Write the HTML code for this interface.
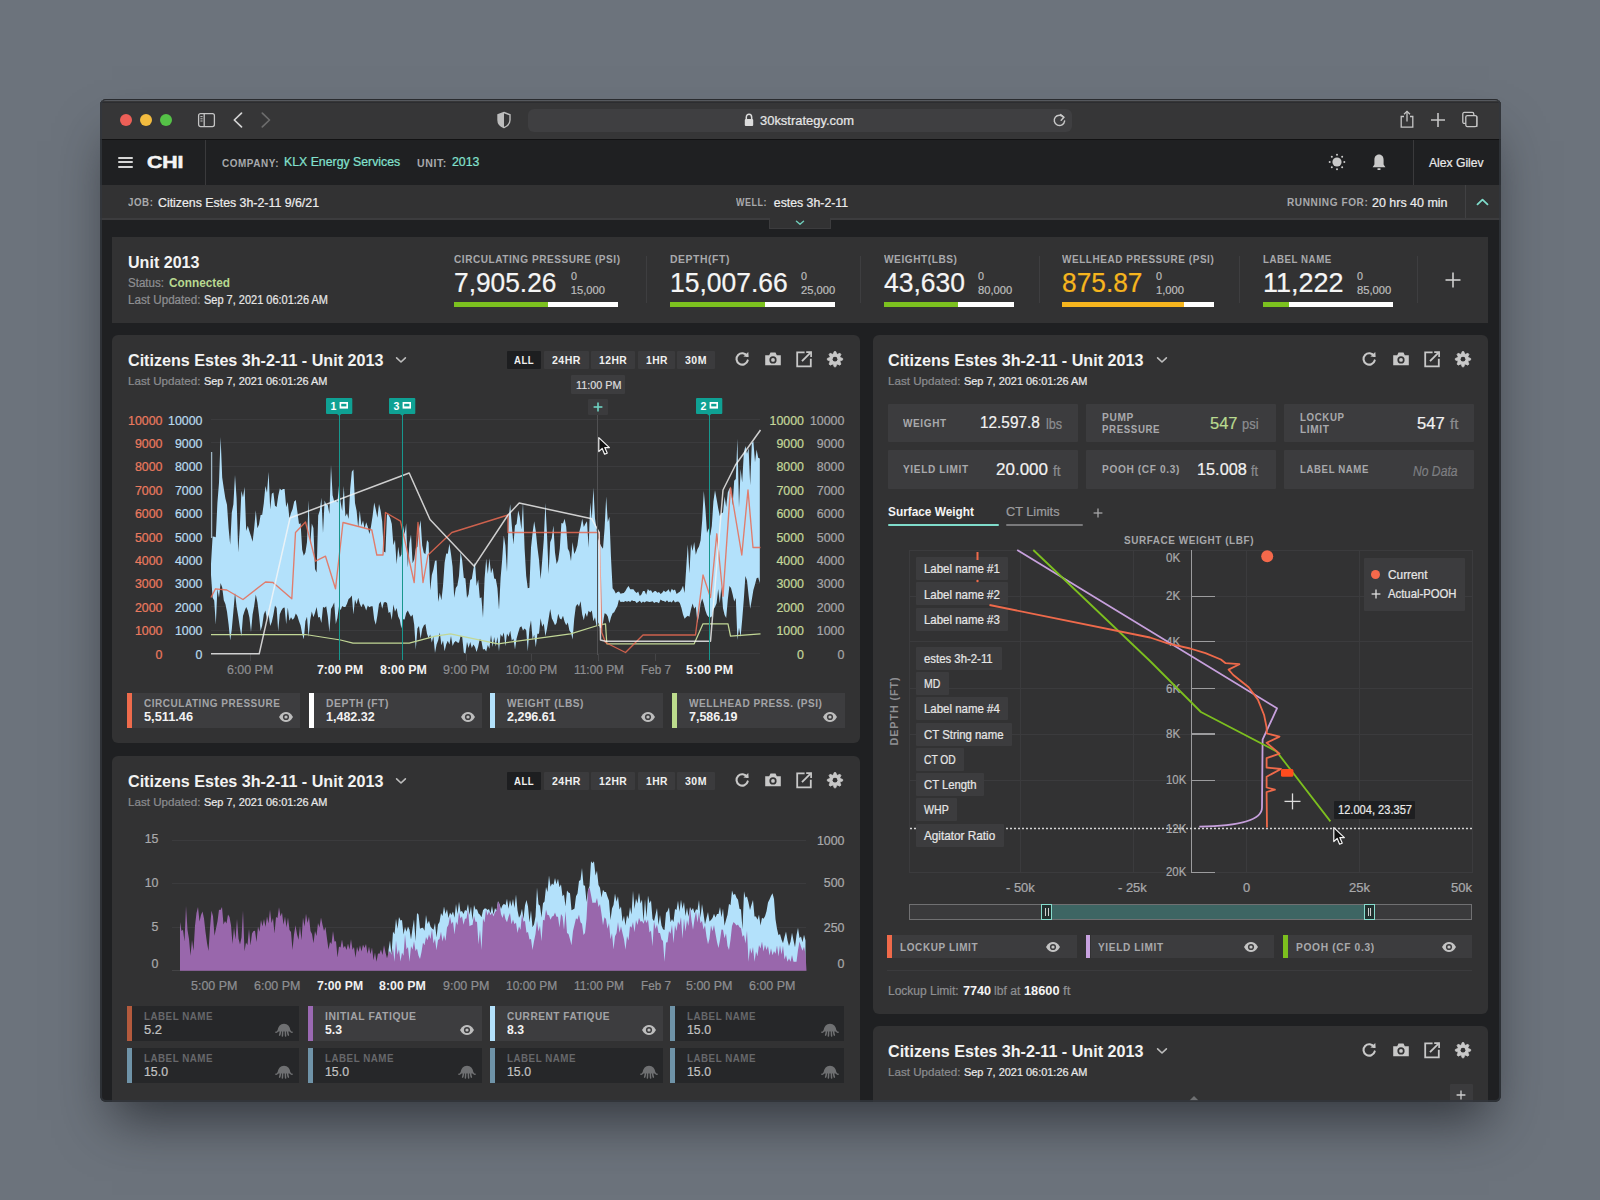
<!DOCTYPE html>
<html><head><meta charset="utf-8">
<style>
*{margin:0;padding:0;box-sizing:border-box}
html,body{width:1600px;height:1200px;overflow:hidden;background:#6c737c;font-family:"Liberation Sans",sans-serif}
.a{position:absolute;white-space:nowrap;line-height:1}
.r{-webkit-text-stroke:0.22px currentColor}
#win{position:absolute;left:99.5px;top:99px;width:1401.3px;height:1002.7px;border-radius:6px 6px 6px 6px;background:#1f2022;overflow:hidden;box-shadow:0 30px 50px -12px rgba(33,36,42,0.75)}
#edge{position:absolute;left:0;top:0;width:1401.3px;height:1002.7px;border-radius:6px 6px 6px 6px;border:2.5px solid rgba(52,56,62,0.75);border-top:1.5px solid rgba(40,43,47,0.9)}
</style></head><body>
<div id="win">
<div class="a" style="left:0.00px;top:0.00px;width:1402.00px;height:40.50px;background:#363637;"></div>
<div class="a" style="left:0.00px;top:40.00px;width:1402.00px;height:1.00px;background:#121213;"></div>
<div class="a" style="left:0.00px;top:1.40px;width:1402.00px;height:0.90px;background:#55585d;"></div>
<div class="a" style="left:0.00px;top:2.50px;width:1402.00px;height:1.00px;background:#2c2d30;"></div>
<div class="a" style="left:20.50px;top:15.00px;width:12.00px;height:12.00px;background:#ec5f57;border-radius:6px"></div>
<div class="a" style="left:40.50px;top:15.00px;width:12.00px;height:12.00px;background:#f2bb3f;border-radius:6px"></div>
<div class="a" style="left:60.50px;top:15.00px;width:12.00px;height:12.00px;background:#55c247;border-radius:6px"></div>
<svg class="a" style="left:96.50px;top:12.00px;" width="22" height="18" viewBox="0 0 22 18"><rect x="2.6" y="2.6" width="15.8" height="13" rx="2" fill="none" stroke="#c4c4c4" stroke-width="1.3"/><line x1="8.2" y1="3" x2="8.2" y2="15.5" stroke="#c4c4c4" stroke-width="1.3"/><line x1="4.4" y1="5.6" x2="6.6" y2="5.6" stroke="#c4c4c4" stroke-width="1"/><line x1="4.4" y1="7.8" x2="6.6" y2="7.8" stroke="#c4c4c4" stroke-width="1"/><line x1="4.4" y1="10" x2="6.6" y2="10" stroke="#c4c4c4" stroke-width="1"/></svg>
<svg class="a" style="left:130.50px;top:11.00px;" width="16" height="20" viewBox="0 0 16 20"><polyline points="11.5,3.2 4.3,10 11.5,16.8" fill="none" stroke="#d2d2d2" stroke-width="1.7" stroke-linecap="round" stroke-linejoin="round"/></svg>
<svg class="a" style="left:158.50px;top:11.00px;" width="16" height="20" viewBox="0 0 16 20"><polyline points="4.3,3.2 11.5,10 4.3,16.8" fill="none" stroke="#6c6c6c" stroke-width="1.7" stroke-linecap="round" stroke-linejoin="round"/></svg>
<svg class="a" style="left:396.50px;top:12.00px;" width="16" height="18" viewBox="0 0 16 18"><path d="M8 1.5 L14 3.8 V9 C14 12.8 11.3 15.3 8 16.6 C4.7 15.3 2 12.8 2 9 V3.8 Z" fill="none" stroke="#bdbdbd" stroke-width="1.4"/><path d="M8 1.5 L2 3.8 V9 C2 12.8 4.7 15.3 8 16.6 Z" fill="#bdbdbd"/></svg>
<div class="a" style="left:428.50px;top:9.50px;width:544.00px;height:23.00px;background:#3f3f41;border-radius:6px"></div>
<svg class="a" style="left:643.50px;top:14.00px;" width="12" height="14" viewBox="0 0 12 14"><path d="M3.3 6 V4.4 C3.3 2.4 4.6 1.2 6 1.2 C7.4 1.2 8.7 2.4 8.7 4.4 V6" fill="none" stroke="#dcdcdc" stroke-width="1.5"/><rect x="1.8" y="6" width="8.4" height="7" rx="1" fill="#dcdcdc"/></svg>
<div class="a t r" style="left:660.50px;top:14.80px;font-size:13px;color:#e6e6e6;transform:scaleX(0.9955);transform-origin:0 0;">30kstrategy.com</div>
<svg class="a" style="left:951.50px;top:13.00px;" width="17" height="17" viewBox="0 0 17 17"><path d="M12.6 5.2 A5.2 5.2 0 1 0 13.6 9" fill="none" stroke="#c8c8c8" stroke-width="1.5" stroke-linecap="round"/><polyline points="9.6,2.6 12.9,5.3 10.2,8.2" fill="none" stroke="#c8c8c8" stroke-width="1.5" stroke-linecap="round" stroke-linejoin="round"/></svg>
<svg class="a" style="left:1297.50px;top:10.00px;" width="20" height="20" viewBox="0 0 20 20"><path d="M7 7.5 H4.2 V18.2 H15.8 V7.5 H13" fill="none" stroke="#c6c6c6" stroke-width="1.3"/><line x1="10" y1="2.5" x2="10" y2="12.5" stroke="#c6c6c6" stroke-width="1.3"/><polyline points="7,5.3 10,2.4 13,5.3" fill="none" stroke="#c6c6c6" stroke-width="1.3"/></svg>
<svg class="a" style="left:1328.50px;top:11.00px;" width="20" height="20" viewBox="0 0 20 20"><line x1="10" y1="3" x2="10" y2="17" stroke="#c6c6c6" stroke-width="1.6"/><line x1="3" y1="10" x2="17" y2="10" stroke="#c6c6c6" stroke-width="1.6"/></svg>
<svg class="a" style="left:1360.50px;top:11.00px;" width="20" height="20" viewBox="0 0 20 20"><rect x="2.8" y="2.4" width="11" height="11" rx="1.5" fill="none" stroke="#c6c6c6" stroke-width="1.3"/><path d="M6.2 16.4 H16.8 V6.2" fill="none" stroke="#c6c6c6" stroke-width="1.3"/><rect x="5.8" y="5.6" width="11" height="11" rx="1.5" fill="#363637" stroke="#c6c6c6" stroke-width="1.3"/></svg>
<div class="a" style="left:0.00px;top:41.00px;width:1402.00px;height:45.00px;background:#1f2022;"></div>
<div class="a" style="left:18.50px;top:58.20px;width:15.20px;height:1.90px;background:#d6d6d6;border-radius:1px"></div>
<div class="a" style="left:18.50px;top:62.40px;width:15.20px;height:1.90px;background:#d6d6d6;border-radius:1px"></div>
<div class="a" style="left:18.50px;top:66.70px;width:15.20px;height:1.90px;background:#d6d6d6;border-radius:1px"></div>
<div class="a t" style="left:47.10px;top:55.59px;font-size:15.6px;color:#f4f4f4;font-weight:bold;-webkit-text-stroke:0.5px #f4f4f4;transform:scaleX(1.3589);transform-origin:0 0;">CHI</div>
<div class="a" style="left:105.50px;top:41.00px;width:1.00px;height:45.00px;background:#3a3a3c;"></div>
<div class="a t" style="left:122.10px;top:58.63px;font-size:10.6px;color:#a8a9ac;font-weight:bold;letter-spacing:0.6px;transform:scaleX(0.9359);transform-origin:0 0;">COMPANY:</div>
<div class="a t r" style="left:184.00px;top:57.33px;font-size:12.6px;color:#83e0cf;transform:scaleX(0.9765);transform-origin:0 0;">KLX Energy Services</div>
<div class="a t" style="left:317.10px;top:58.63px;font-size:10.6px;color:#a8a9ac;font-weight:bold;letter-spacing:0.6px;transform:scaleX(0.9974);transform-origin:0 0;">UNIT:</div>
<div class="a t r" style="left:352.50px;top:57.33px;font-size:12.6px;color:#83e0cf;transform:scaleX(0.9810);transform-origin:0 0;">2013</div>
<svg class="a" style="left:1228.20px;top:54.00px;" width="18" height="18" viewBox="0 0 18 18"><circle cx="9" cy="9" r="4.6" fill="#c9c9c9"/><circle cx="16.30" cy="9.00" r="1" fill="#c9c9c9"/><circle cx="14.16" cy="14.16" r="1" fill="#c9c9c9"/><circle cx="9.00" cy="16.30" r="1" fill="#c9c9c9"/><circle cx="3.84" cy="14.16" r="1" fill="#c9c9c9"/><circle cx="1.70" cy="9.00" r="1" fill="#c9c9c9"/><circle cx="3.84" cy="3.84" r="1" fill="#c9c9c9"/><circle cx="9.00" cy="1.70" r="1" fill="#c9c9c9"/><circle cx="14.16" cy="3.84" r="1" fill="#c9c9c9"/></svg>
<svg class="a" style="left:1271.50px;top:54.00px;" width="16" height="19" viewBox="0 0 16 19"><path d="M8 1.6 C5 1.6 3.4 4 3.4 7 V11.6 L1.6 14.2 H14.4 L12.6 11.6 V7 C12.6 4 11 1.6 8 1.6 Z" fill="#c9c9c9"/><rect x="6.3" y="15.2" width="3.4" height="1.8" rx="0.9" fill="#c9c9c9"/></svg>
<div class="a" style="left:1313.00px;top:41.00px;width:1.00px;height:45.00px;background:#3a3a3c;"></div>
<div class="a t r" style="left:1329.50px;top:58.33px;font-size:12.6px;color:#e9e9e9;transform:scaleX(0.9629);transform-origin:0 0;">Alex Gilev</div>
<div class="a" style="left:0.00px;top:86.00px;width:1402.00px;height:33.00px;background:#323233;"></div>
<div class="a" style="left:0.00px;top:119.00px;width:1402.00px;height:1.60px;background:#3c3c3e;"></div>
<div class="a t" style="left:28.00px;top:98.67px;font-size:10.2px;color:#a8a9ac;font-weight:bold;letter-spacing:0.6px;transform:scaleX(0.9533);transform-origin:0 0;">JOB:</div>
<div class="a t r" style="left:58.00px;top:97.99px;font-size:12.3px;color:#ececec;transform:scaleX(1.0037);transform-origin:0 0;">Citizens Estes 3h-2-11 9/6/21</div>
<div class="a t" style="left:636.30px;top:98.67px;font-size:10.2px;color:#a8a9ac;font-weight:bold;letter-spacing:0.6px;transform:scaleX(0.8794);transform-origin:0 0;">WELL:</div>
<div class="a t r" style="left:674.30px;top:97.99px;font-size:12.3px;color:#ececec;">estes 3h-2-11</div>
<div class="a t" style="left:1187.10px;top:98.67px;font-size:10.2px;color:#a8a9ac;font-weight:bold;letter-spacing:0.6px;transform:scaleX(0.9870);transform-origin:0 0;">RUNNING FOR:</div>
<div class="a t r" style="left:1272.50px;top:97.99px;font-size:12.3px;color:#ececec;transform:scaleX(1.0132);transform-origin:0 0;">20 hrs 40 min</div>
<div class="a" style="left:1365.00px;top:86.00px;width:1.00px;height:33.00px;background:#414143;"></div>
<svg class="a" style="left:1375.50px;top:98.00px;" width="15" height="10" viewBox="0 0 15 10"><polyline points="2.5,7.3 7.5,2.6 12.5,7.3" fill="none" stroke="#7fdccb" stroke-width="1.8" stroke-linecap="round" stroke-linejoin="round"/></svg>
<div class="a" style="left:669.30px;top:119.00px;width:62.50px;height:11.00px;background:#323233;border:1px solid #3c3c3e;border-top:none"></div>
<svg class="a" style="left:694.50px;top:120.00px;" width="12" height="8" viewBox="0 0 12 8"><polyline points="2.5,2.3 6,5.3 9.5,2.3" fill="none" stroke="#6fcbb9" stroke-width="1.5" stroke-linecap="round" stroke-linejoin="round"/></svg>
<div class="a" style="left:12.50px;top:138.00px;width:1376.00px;height:85.50px;background:#323233;"></div>
<div class="a t" style="left:28.00px;top:155.93px;font-size:15.8px;color:#f3f3f3;font-weight:bold;transform:scaleX(1.0178);transform-origin:0 0;">Unit 2013</div>
<div class="a t r" style="left:28.00px;top:178.04px;font-size:12px;color:#8e8f92;transform:scaleX(0.9636);transform-origin:0 0;">Status:</div>
<div class="a t" style="left:69.50px;top:177.70px;font-size:12.4px;color:#b8d890;font-weight:bold;transform:scaleX(0.9527);transform-origin:0 0;">Connected</div>
<div class="a t r" style="left:28.00px;top:195.04px;font-size:12px;color:#8e8f92;transform:scaleX(0.9703);transform-origin:0 0;">Last Updated:</div>
<div class="a t r" style="left:104.00px;top:195.04px;font-size:12px;color:#e6e6e6;transform:scaleX(0.9154);transform-origin:0 0;">Sep 7, 2021 06:01:26 AM</div>
<div class="a t" style="left:354.90px;top:154.86px;font-size:10.8px;color:#a8a9ac;font-weight:bold;letter-spacing:0.6px;transform:scaleX(0.9298);transform-origin:0 0;">CIRCULATING PRESSURE (PSI)</div>
<div class="a t r" style="left:354.90px;top:170.22px;font-size:27.5px;color:#f5f5f5;transform:scaleX(0.9566);transform-origin:0 0;">7,905.26</div>
<div class="a t r" style="left:471.20px;top:171.52px;font-size:11.2px;color:#bcbcbc;transform:scaleX(0.9624);transform-origin:0 0;">0</div>
<div class="a t r" style="left:471.20px;top:185.52px;font-size:11.2px;color:#bcbcbc;">15,000</div>
<div class="a" style="left:354.90px;top:202.80px;width:163.60px;height:5.40px;background:#ffffff;"></div>
<div class="a" style="left:354.90px;top:202.80px;width:93.20px;height:5.40px;background:#7cc11f;"></div>
<div class="a" style="left:546.50px;top:157.00px;width:1.00px;height:47.00px;background:#3e3e40;"></div>
<div class="a t" style="left:570.50px;top:154.86px;font-size:10.8px;color:#a8a9ac;font-weight:bold;letter-spacing:0.6px;transform:scaleX(0.9619);transform-origin:0 0;">DEPTH(FT)</div>
<div class="a t r" style="left:570.50px;top:170.22px;font-size:27.5px;color:#f5f5f5;transform:scaleX(0.9629);transform-origin:0 0;">15,007.66</div>
<div class="a t r" style="left:701.50px;top:171.52px;font-size:11.2px;color:#bcbcbc;transform:scaleX(0.9624);transform-origin:0 0;">0</div>
<div class="a t r" style="left:701.50px;top:185.52px;font-size:11.2px;color:#bcbcbc;">25,000</div>
<div class="a" style="left:570.50px;top:202.80px;width:165.00px;height:5.40px;background:#ffffff;"></div>
<div class="a" style="left:570.50px;top:202.80px;width:95.00px;height:5.40px;background:#7cc11f;"></div>
<div class="a" style="left:760.50px;top:157.00px;width:1.00px;height:47.00px;background:#3e3e40;"></div>
<div class="a t" style="left:784.50px;top:154.86px;font-size:10.8px;color:#a8a9ac;font-weight:bold;letter-spacing:0.6px;transform:scaleX(0.9354);transform-origin:0 0;">WEIGHT(LBS)</div>
<div class="a t r" style="left:784.50px;top:170.22px;font-size:27.5px;color:#f5f5f5;transform:scaleX(0.9629);transform-origin:0 0;">43,630</div>
<div class="a t r" style="left:878.50px;top:171.52px;font-size:11.2px;color:#bcbcbc;transform:scaleX(0.9624);transform-origin:0 0;">0</div>
<div class="a t r" style="left:878.50px;top:185.52px;font-size:11.2px;color:#bcbcbc;">80,000</div>
<div class="a" style="left:784.50px;top:202.80px;width:130.30px;height:5.40px;background:#ffffff;"></div>
<div class="a" style="left:784.50px;top:202.80px;width:74.30px;height:5.40px;background:#7cc11f;"></div>
<div class="a" style="left:939.00px;top:157.00px;width:1.00px;height:47.00px;background:#3e3e40;"></div>
<div class="a t" style="left:962.50px;top:154.86px;font-size:10.8px;color:#a8a9ac;font-weight:bold;letter-spacing:0.6px;transform:scaleX(0.9232);transform-origin:0 0;">WELLHEAD PRESSURE (PSI)</div>
<div class="a t r" style="left:962.50px;top:170.22px;font-size:27.5px;color:#f6b51e;transform:scaleX(0.9569);transform-origin:0 0;">875.87</div>
<div class="a t r" style="left:1056.50px;top:171.52px;font-size:11.2px;color:#bcbcbc;transform:scaleX(0.9624);transform-origin:0 0;">0</div>
<div class="a t r" style="left:1056.50px;top:185.52px;font-size:11.2px;color:#bcbcbc;">1,000</div>
<div class="a" style="left:962.50px;top:202.80px;width:152.00px;height:5.40px;background:#ffffff;"></div>
<div class="a" style="left:962.50px;top:202.80px;width:121.50px;height:5.40px;background:#f6b51e;"></div>
<div class="a" style="left:1139.50px;top:157.00px;width:1.00px;height:47.00px;background:#3e3e40;"></div>
<div class="a t" style="left:1163.90px;top:154.86px;font-size:10.8px;color:#a8a9ac;font-weight:bold;letter-spacing:0.6px;transform:scaleX(0.8982);transform-origin:0 0;">LABEL NAME</div>
<div class="a t r" style="left:1163.90px;top:170.22px;font-size:27.5px;color:#f5f5f5;transform:scaleX(0.9820);transform-origin:0 0;">11,222</div>
<div class="a t r" style="left:1257.50px;top:171.52px;font-size:11.2px;color:#bcbcbc;transform:scaleX(0.9624);transform-origin:0 0;">0</div>
<div class="a t r" style="left:1257.50px;top:185.52px;font-size:11.2px;color:#bcbcbc;">85,000</div>
<div class="a" style="left:1163.90px;top:202.80px;width:130.00px;height:5.40px;background:#ffffff;"></div>
<div class="a" style="left:1163.90px;top:202.80px;width:25.60px;height:5.40px;background:#7cc11f;"></div>
<div class="a" style="left:1317.50px;top:157.00px;width:1.00px;height:47.00px;background:#3e3e40;"></div>
<svg class="a" style="left:1344.50px;top:172.00px;" width="18" height="18" viewBox="0 0 18 18"><line x1="9" y1="1.5" x2="9" y2="16.5" stroke="#d0d0d0" stroke-width="1.6"/><line x1="1.5" y1="9" x2="16.5" y2="9" stroke="#d0d0d0" stroke-width="1.6"/></svg>
<div class="a" style="left:12.50px;top:236.00px;width:748.00px;height:408.00px;background:#323233;border-radius:6px"></div>
<div class="a" style="left:12.50px;top:657.00px;width:748.00px;height:400.00px;background:#323233;border-radius:6px"></div>
<div class="a" style="left:773.00px;top:236.00px;width:615.50px;height:678.50px;background:#323233;border-radius:6px"></div>
<div class="a" style="left:773.00px;top:927.00px;width:615.50px;height:200.00px;background:#323233;border-radius:6px"></div>
<div class="a t" style="left:28.10px;top:252.89px;font-size:16.2px;color:#f2f2f2;font-weight:bold;transform:scaleX(0.9961);transform-origin:0 0;">Citizens Estes 3h-2-11 - Unit 2013</div>
<svg class="a" style="left:294.50px;top:256.00px;" width="14" height="10" viewBox="0 0 14 10"><polyline points="2.6,2.8 7,7.0 11.4,2.8" fill="none" stroke="#bdbdbd" stroke-width="1.6" stroke-linecap="round" stroke-linejoin="round"/></svg>
<div class="a t r" style="left:28.10px;top:276.52px;font-size:11.2px;color:#8b8c8f;transform:scaleX(1.0392);transform-origin:0 0;">Last Updated:</div>
<div class="a t r" style="left:104.10px;top:276.52px;font-size:11.2px;color:#e9e9e9;transform:scaleX(0.9772);transform-origin:0 0;">Sep 7, 2021 06:01:26 AM</div>
<div class="a" style="left:407.40px;top:251.50px;width:34.40px;height:18.20px;background:#1d1e20;border-radius:1px"></div>
<div class="a t" style="left:414.25px;top:255.63px;font-size:10.6px;color:#f0f0f0;font-weight:bold;letter-spacing:0.5px;transform:scaleX(0.9052);transform-origin:0 0;">ALL</div>
<div class="a" style="left:444.80px;top:251.50px;width:44.40px;height:18.20px;background:#3b3b3d;border-radius:1px"></div>
<div class="a t" style="left:452.80px;top:255.63px;font-size:10.6px;color:#f0f0f0;font-weight:bold;letter-spacing:0.5px;transform:scaleX(0.9968);transform-origin:0 0;">24HR</div>
<div class="a" style="left:491.30px;top:251.50px;width:44.70px;height:18.20px;background:#3b3b3d;border-radius:1px"></div>
<div class="a t" style="left:499.80px;top:255.63px;font-size:10.6px;color:#f0f0f0;font-weight:bold;letter-spacing:0.5px;transform:scaleX(0.9727);transform-origin:0 0;">12HR</div>
<div class="a" style="left:538.00px;top:251.50px;width:37.20px;height:18.20px;background:#3b3b3d;border-radius:1px"></div>
<div class="a t" style="left:546.00px;top:255.63px;font-size:10.6px;color:#f0f0f0;font-weight:bold;letter-spacing:0.5px;transform:scaleX(0.9690);transform-origin:0 0;">1HR</div>
<div class="a" style="left:577.90px;top:251.50px;width:37.20px;height:18.20px;background:#3b3b3d;border-radius:1px"></div>
<div class="a t" style="left:585.50px;top:255.63px;font-size:10.6px;color:#f0f0f0;font-weight:bold;letter-spacing:0.5px;transform:scaleX(0.9951);transform-origin:0 0;">30M</div>
<svg class="a" style="left:633.10px;top:250.90px;" width="18" height="18" viewBox="0 0 18 18"><path d="M14.1 6.0 A5.7 5.7 0 1 0 14.7 10.4" fill="none" stroke="#c8c8c8" stroke-width="2.1" stroke-linecap="round"/><path d="M10.4 6.6 L15.6 7.0 L15.3 1.9 Z" fill="#c8c8c8"/></svg>
<svg class="a" style="left:664.40px;top:250.70px;" width="18" height="18" viewBox="0 0 18 18"><path d="M1.2 5.2 H5.2 L6.5 2.6 H11.5 L12.8 5.2 H16.8 V15.2 H1.2 Z" fill="#c8c8c8"/><circle cx="9" cy="9.9" r="3.6" fill="#323233"/><circle cx="9" cy="9.9" r="1.9" fill="#c8c8c8"/></svg>
<svg class="a" style="left:695.30px;top:251.00px;" width="18" height="18" viewBox="0 0 18 18"><path d="M9.6 2.3 H2.2 V16.3 H15.8 V8.8" fill="none" stroke="#c8c8c8" stroke-width="1.8"/><path d="M11.2 2.1 H16.1 V7.0" fill="none" stroke="#c8c8c8" stroke-width="1.7"/><line x1="15.8" y1="2.4" x2="7.0" y2="11.2" stroke="#c8c8c8" stroke-width="1.9"/></svg>
<svg class="a" style="left:726.40px;top:251.10px;" width="18" height="18" viewBox="0 0 18 18"><path d="M8.25,1.54 L9.75,1.54 L10.63,3.84 L11.64,4.26 L13.88,3.25 L14.95,4.32 L13.94,6.56 L14.36,7.57 L16.66,8.45 L16.66,9.95 L14.36,10.83 L13.94,11.84 L14.95,14.08 L13.88,15.15 L11.64,14.14 L10.63,14.56 L9.75,16.86 L8.25,16.86 L7.37,14.56 L6.36,14.14 L4.12,15.15 L3.05,14.08 L4.06,11.84 L3.64,10.83 L1.34,9.95 L1.34,8.45 L3.64,7.57 L4.06,6.56 L3.05,4.32 L4.12,3.25 L6.36,4.26 L7.37,3.84Z" fill="#c8c8c8" stroke="#c8c8c8" stroke-width="0.8" stroke-linejoin="round"/><circle cx="9" cy="9.2" r="2.4" fill="#323233"/></svg>
<div class="a t" style="left:28.10px;top:673.89px;font-size:16.2px;color:#f2f2f2;font-weight:bold;transform:scaleX(0.9961);transform-origin:0 0;">Citizens Estes 3h-2-11 - Unit 2013</div>
<svg class="a" style="left:294.50px;top:677.00px;" width="14" height="10" viewBox="0 0 14 10"><polyline points="2.6,2.8 7,7.0 11.4,2.8" fill="none" stroke="#bdbdbd" stroke-width="1.6" stroke-linecap="round" stroke-linejoin="round"/></svg>
<div class="a t r" style="left:28.10px;top:697.52px;font-size:11.2px;color:#8b8c8f;transform:scaleX(1.0392);transform-origin:0 0;">Last Updated:</div>
<div class="a t r" style="left:104.10px;top:697.52px;font-size:11.2px;color:#e9e9e9;transform:scaleX(0.9772);transform-origin:0 0;">Sep 7, 2021 06:01:26 AM</div>
<div class="a" style="left:407.40px;top:672.50px;width:34.40px;height:18.20px;background:#1d1e20;border-radius:1px"></div>
<div class="a t" style="left:414.25px;top:676.63px;font-size:10.6px;color:#f0f0f0;font-weight:bold;letter-spacing:0.5px;transform:scaleX(0.9052);transform-origin:0 0;">ALL</div>
<div class="a" style="left:444.80px;top:672.50px;width:44.40px;height:18.20px;background:#3b3b3d;border-radius:1px"></div>
<div class="a t" style="left:452.80px;top:676.63px;font-size:10.6px;color:#f0f0f0;font-weight:bold;letter-spacing:0.5px;transform:scaleX(0.9968);transform-origin:0 0;">24HR</div>
<div class="a" style="left:491.30px;top:672.50px;width:44.70px;height:18.20px;background:#3b3b3d;border-radius:1px"></div>
<div class="a t" style="left:499.80px;top:676.63px;font-size:10.6px;color:#f0f0f0;font-weight:bold;letter-spacing:0.5px;transform:scaleX(0.9727);transform-origin:0 0;">12HR</div>
<div class="a" style="left:538.00px;top:672.50px;width:37.20px;height:18.20px;background:#3b3b3d;border-radius:1px"></div>
<div class="a t" style="left:546.00px;top:676.63px;font-size:10.6px;color:#f0f0f0;font-weight:bold;letter-spacing:0.5px;transform:scaleX(0.9690);transform-origin:0 0;">1HR</div>
<div class="a" style="left:577.90px;top:672.50px;width:37.20px;height:18.20px;background:#3b3b3d;border-radius:1px"></div>
<div class="a t" style="left:585.50px;top:676.63px;font-size:10.6px;color:#f0f0f0;font-weight:bold;letter-spacing:0.5px;transform:scaleX(0.9951);transform-origin:0 0;">30M</div>
<svg class="a" style="left:633.10px;top:672.20px;" width="18" height="18" viewBox="0 0 18 18"><path d="M14.1 6.0 A5.7 5.7 0 1 0 14.7 10.4" fill="none" stroke="#c8c8c8" stroke-width="2.1" stroke-linecap="round"/><path d="M10.4 6.6 L15.6 7.0 L15.3 1.9 Z" fill="#c8c8c8"/></svg>
<svg class="a" style="left:664.40px;top:672.00px;" width="18" height="18" viewBox="0 0 18 18"><path d="M1.2 5.2 H5.2 L6.5 2.6 H11.5 L12.8 5.2 H16.8 V15.2 H1.2 Z" fill="#c8c8c8"/><circle cx="9" cy="9.9" r="3.6" fill="#323233"/><circle cx="9" cy="9.9" r="1.9" fill="#c8c8c8"/></svg>
<svg class="a" style="left:695.30px;top:672.30px;" width="18" height="18" viewBox="0 0 18 18"><path d="M9.6 2.3 H2.2 V16.3 H15.8 V8.8" fill="none" stroke="#c8c8c8" stroke-width="1.8"/><path d="M11.2 2.1 H16.1 V7.0" fill="none" stroke="#c8c8c8" stroke-width="1.7"/><line x1="15.8" y1="2.4" x2="7.0" y2="11.2" stroke="#c8c8c8" stroke-width="1.9"/></svg>
<svg class="a" style="left:726.40px;top:672.40px;" width="18" height="18" viewBox="0 0 18 18"><path d="M8.25,1.54 L9.75,1.54 L10.63,3.84 L11.64,4.26 L13.88,3.25 L14.95,4.32 L13.94,6.56 L14.36,7.57 L16.66,8.45 L16.66,9.95 L14.36,10.83 L13.94,11.84 L14.95,14.08 L13.88,15.15 L11.64,14.14 L10.63,14.56 L9.75,16.86 L8.25,16.86 L7.37,14.56 L6.36,14.14 L4.12,15.15 L3.05,14.08 L4.06,11.84 L3.64,10.83 L1.34,9.95 L1.34,8.45 L3.64,7.57 L4.06,6.56 L3.05,4.32 L4.12,3.25 L6.36,4.26 L7.37,3.84Z" fill="#c8c8c8" stroke="#c8c8c8" stroke-width="0.8" stroke-linejoin="round"/><circle cx="9" cy="9.2" r="2.4" fill="#323233"/></svg>
<div class="a t" style="left:788.60px;top:252.89px;font-size:16.2px;color:#f2f2f2;font-weight:bold;transform:scaleX(0.9961);transform-origin:0 0;">Citizens Estes 3h-2-11 - Unit 2013</div>
<svg class="a" style="left:1055.00px;top:256.00px;" width="14" height="10" viewBox="0 0 14 10"><polyline points="2.6,2.8 7,7.0 11.4,2.8" fill="none" stroke="#bdbdbd" stroke-width="1.6" stroke-linecap="round" stroke-linejoin="round"/></svg>
<div class="a t r" style="left:788.60px;top:276.52px;font-size:11.2px;color:#8b8c8f;transform:scaleX(1.0392);transform-origin:0 0;">Last Updated:</div>
<div class="a t r" style="left:864.60px;top:276.52px;font-size:11.2px;color:#e9e9e9;transform:scaleX(0.9772);transform-origin:0 0;">Sep 7, 2021 06:01:26 AM</div>
<svg class="a" style="left:1260.40px;top:250.90px;" width="18" height="18" viewBox="0 0 18 18"><path d="M14.1 6.0 A5.7 5.7 0 1 0 14.7 10.4" fill="none" stroke="#c8c8c8" stroke-width="2.1" stroke-linecap="round"/><path d="M10.4 6.6 L15.6 7.0 L15.3 1.9 Z" fill="#c8c8c8"/></svg>
<svg class="a" style="left:1292.40px;top:250.70px;" width="18" height="18" viewBox="0 0 18 18"><path d="M1.2 5.2 H5.2 L6.5 2.6 H11.5 L12.8 5.2 H16.8 V15.2 H1.2 Z" fill="#c8c8c8"/><circle cx="9" cy="9.9" r="3.6" fill="#323233"/><circle cx="9" cy="9.9" r="1.9" fill="#c8c8c8"/></svg>
<svg class="a" style="left:1323.40px;top:251.00px;" width="18" height="18" viewBox="0 0 18 18"><path d="M9.6 2.3 H2.2 V16.3 H15.8 V8.8" fill="none" stroke="#c8c8c8" stroke-width="1.8"/><path d="M11.2 2.1 H16.1 V7.0" fill="none" stroke="#c8c8c8" stroke-width="1.7"/><line x1="15.8" y1="2.4" x2="7.0" y2="11.2" stroke="#c8c8c8" stroke-width="1.9"/></svg>
<svg class="a" style="left:1354.80px;top:251.10px;" width="18" height="18" viewBox="0 0 18 18"><path d="M8.25,1.54 L9.75,1.54 L10.63,3.84 L11.64,4.26 L13.88,3.25 L14.95,4.32 L13.94,6.56 L14.36,7.57 L16.66,8.45 L16.66,9.95 L14.36,10.83 L13.94,11.84 L14.95,14.08 L13.88,15.15 L11.64,14.14 L10.63,14.56 L9.75,16.86 L8.25,16.86 L7.37,14.56 L6.36,14.14 L4.12,15.15 L3.05,14.08 L4.06,11.84 L3.64,10.83 L1.34,9.95 L1.34,8.45 L3.64,7.57 L4.06,6.56 L3.05,4.32 L4.12,3.25 L6.36,4.26 L7.37,3.84Z" fill="#c8c8c8" stroke="#c8c8c8" stroke-width="0.8" stroke-linejoin="round"/><circle cx="9" cy="9.2" r="2.4" fill="#323233"/></svg>
<div class="a t" style="left:788.60px;top:943.89px;font-size:16.2px;color:#f2f2f2;font-weight:bold;transform:scaleX(0.9961);transform-origin:0 0;">Citizens Estes 3h-2-11 - Unit 2013</div>
<svg class="a" style="left:1055.00px;top:947.00px;" width="14" height="10" viewBox="0 0 14 10"><polyline points="2.6,2.8 7,7.0 11.4,2.8" fill="none" stroke="#bdbdbd" stroke-width="1.6" stroke-linecap="round" stroke-linejoin="round"/></svg>
<div class="a t r" style="left:788.60px;top:967.52px;font-size:11.2px;color:#8b8c8f;transform:scaleX(1.0392);transform-origin:0 0;">Last Updated:</div>
<div class="a t r" style="left:864.60px;top:967.52px;font-size:11.2px;color:#e9e9e9;transform:scaleX(0.9772);transform-origin:0 0;">Sep 7, 2021 06:01:26 AM</div>
<svg class="a" style="left:1260.40px;top:942.20px;" width="18" height="18" viewBox="0 0 18 18"><path d="M14.1 6.0 A5.7 5.7 0 1 0 14.7 10.4" fill="none" stroke="#c8c8c8" stroke-width="2.1" stroke-linecap="round"/><path d="M10.4 6.6 L15.6 7.0 L15.3 1.9 Z" fill="#c8c8c8"/></svg>
<svg class="a" style="left:1292.40px;top:942.00px;" width="18" height="18" viewBox="0 0 18 18"><path d="M1.2 5.2 H5.2 L6.5 2.6 H11.5 L12.8 5.2 H16.8 V15.2 H1.2 Z" fill="#c8c8c8"/><circle cx="9" cy="9.9" r="3.6" fill="#323233"/><circle cx="9" cy="9.9" r="1.9" fill="#c8c8c8"/></svg>
<svg class="a" style="left:1323.40px;top:942.30px;" width="18" height="18" viewBox="0 0 18 18"><path d="M9.6 2.3 H2.2 V16.3 H15.8 V8.8" fill="none" stroke="#c8c8c8" stroke-width="1.8"/><path d="M11.2 2.1 H16.1 V7.0" fill="none" stroke="#c8c8c8" stroke-width="1.7"/><line x1="15.8" y1="2.4" x2="7.0" y2="11.2" stroke="#c8c8c8" stroke-width="1.9"/></svg>
<svg class="a" style="left:1354.80px;top:942.40px;" width="18" height="18" viewBox="0 0 18 18"><path d="M8.25,1.54 L9.75,1.54 L10.63,3.84 L11.64,4.26 L13.88,3.25 L14.95,4.32 L13.94,6.56 L14.36,7.57 L16.66,8.45 L16.66,9.95 L14.36,10.83 L13.94,11.84 L14.95,14.08 L13.88,15.15 L11.64,14.14 L10.63,14.56 L9.75,16.86 L8.25,16.86 L7.37,14.56 L6.36,14.14 L4.12,15.15 L3.05,14.08 L4.06,11.84 L3.64,10.83 L1.34,9.95 L1.34,8.45 L3.64,7.57 L4.06,6.56 L3.05,4.32 L4.12,3.25 L6.36,4.26 L7.37,3.84Z" fill="#c8c8c8" stroke="#c8c8c8" stroke-width="0.8" stroke-linejoin="round"/><circle cx="9" cy="9.2" r="2.4" fill="#323233"/></svg>
<div class="a" style="left:111.00px;top:554.25px;width:549.50px;height:1.00px;background:#3b3b3d;"></div>
<div class="a" style="left:111.00px;top:530.83px;width:549.50px;height:1.00px;background:#3b3b3d;"></div>
<div class="a" style="left:111.00px;top:507.40px;width:549.50px;height:1.00px;background:#3b3b3d;"></div>
<div class="a" style="left:111.00px;top:483.98px;width:549.50px;height:1.00px;background:#3b3b3d;"></div>
<div class="a" style="left:111.00px;top:460.55px;width:549.50px;height:1.00px;background:#3b3b3d;"></div>
<div class="a" style="left:111.00px;top:437.12px;width:549.50px;height:1.00px;background:#3b3b3d;"></div>
<div class="a" style="left:111.00px;top:413.70px;width:549.50px;height:1.00px;background:#3b3b3d;"></div>
<div class="a" style="left:111.00px;top:390.27px;width:549.50px;height:1.00px;background:#3b3b3d;"></div>
<div class="a" style="left:111.00px;top:366.85px;width:549.50px;height:1.00px;background:#3b3b3d;"></div>
<div class="a" style="left:111.00px;top:343.42px;width:549.50px;height:1.00px;background:#3b3b3d;"></div>
<div class="a" style="left:111.00px;top:320.00px;width:549.50px;height:1.00px;background:#3b3b3d;"></div>
<div class="a t r" style="left:56.10px;top:549.75px;font-size:12.4px;color:#ea7a5f;">0</div>
<div class="a t r" style="left:96.10px;top:549.75px;font-size:12.4px;color:#b9daee;">0</div>
<div class="a t r" style="left:697.60px;top:549.75px;font-size:12.4px;color:#c4d79a;">0</div>
<div class="a t r" style="left:738.00px;top:549.75px;font-size:12.4px;color:#a6a6a8;">0</div>
<div class="a t r" style="left:35.40px;top:526.33px;font-size:12.4px;color:#ea7a5f;">1000</div>
<div class="a t r" style="left:75.40px;top:526.33px;font-size:12.4px;color:#b9daee;">1000</div>
<div class="a t r" style="left:676.90px;top:526.33px;font-size:12.4px;color:#c4d79a;">1000</div>
<div class="a t r" style="left:717.30px;top:526.33px;font-size:12.4px;color:#a6a6a8;">1000</div>
<div class="a t r" style="left:35.40px;top:502.90px;font-size:12.4px;color:#ea7a5f;">2000</div>
<div class="a t r" style="left:75.40px;top:502.90px;font-size:12.4px;color:#b9daee;">2000</div>
<div class="a t r" style="left:676.90px;top:502.90px;font-size:12.4px;color:#c4d79a;">2000</div>
<div class="a t r" style="left:717.30px;top:502.90px;font-size:12.4px;color:#a6a6a8;">2000</div>
<div class="a t r" style="left:35.40px;top:479.48px;font-size:12.4px;color:#ea7a5f;">3000</div>
<div class="a t r" style="left:75.40px;top:479.48px;font-size:12.4px;color:#b9daee;">3000</div>
<div class="a t r" style="left:676.90px;top:479.48px;font-size:12.4px;color:#c4d79a;">3000</div>
<div class="a t r" style="left:717.30px;top:479.48px;font-size:12.4px;color:#a6a6a8;">3000</div>
<div class="a t r" style="left:35.40px;top:456.05px;font-size:12.4px;color:#ea7a5f;">4000</div>
<div class="a t r" style="left:75.40px;top:456.05px;font-size:12.4px;color:#b9daee;">4000</div>
<div class="a t r" style="left:676.90px;top:456.05px;font-size:12.4px;color:#c4d79a;">4000</div>
<div class="a t r" style="left:717.30px;top:456.05px;font-size:12.4px;color:#a6a6a8;">4000</div>
<div class="a t r" style="left:35.40px;top:432.63px;font-size:12.4px;color:#ea7a5f;">5000</div>
<div class="a t r" style="left:75.40px;top:432.63px;font-size:12.4px;color:#b9daee;">5000</div>
<div class="a t r" style="left:676.90px;top:432.63px;font-size:12.4px;color:#c4d79a;">5000</div>
<div class="a t r" style="left:717.30px;top:432.63px;font-size:12.4px;color:#a6a6a8;">5000</div>
<div class="a t r" style="left:35.40px;top:409.20px;font-size:12.4px;color:#ea7a5f;">6000</div>
<div class="a t r" style="left:75.40px;top:409.20px;font-size:12.4px;color:#b9daee;">6000</div>
<div class="a t r" style="left:676.90px;top:409.20px;font-size:12.4px;color:#c4d79a;">6000</div>
<div class="a t r" style="left:717.30px;top:409.20px;font-size:12.4px;color:#a6a6a8;">6000</div>
<div class="a t r" style="left:35.40px;top:385.78px;font-size:12.4px;color:#ea7a5f;">7000</div>
<div class="a t r" style="left:75.40px;top:385.78px;font-size:12.4px;color:#b9daee;">7000</div>
<div class="a t r" style="left:676.90px;top:385.78px;font-size:12.4px;color:#c4d79a;">7000</div>
<div class="a t r" style="left:717.30px;top:385.78px;font-size:12.4px;color:#a6a6a8;">7000</div>
<div class="a t r" style="left:35.40px;top:362.35px;font-size:12.4px;color:#ea7a5f;">8000</div>
<div class="a t r" style="left:75.40px;top:362.35px;font-size:12.4px;color:#b9daee;">8000</div>
<div class="a t r" style="left:676.90px;top:362.35px;font-size:12.4px;color:#c4d79a;">8000</div>
<div class="a t r" style="left:717.30px;top:362.35px;font-size:12.4px;color:#a6a6a8;">8000</div>
<div class="a t r" style="left:35.40px;top:338.93px;font-size:12.4px;color:#ea7a5f;">9000</div>
<div class="a t r" style="left:75.40px;top:338.93px;font-size:12.4px;color:#b9daee;">9000</div>
<div class="a t r" style="left:676.90px;top:338.93px;font-size:12.4px;color:#c4d79a;">9000</div>
<div class="a t r" style="left:717.30px;top:338.93px;font-size:12.4px;color:#a6a6a8;">9000</div>
<div class="a t r" style="left:28.50px;top:315.50px;font-size:12.4px;color:#ea7a5f;">10000</div>
<div class="a t r" style="left:68.50px;top:315.50px;font-size:12.4px;color:#b9daee;">10000</div>
<div class="a t r" style="left:670.00px;top:315.50px;font-size:12.4px;color:#c4d79a;">10000</div>
<div class="a t r" style="left:710.40px;top:315.50px;font-size:12.4px;color:#a6a6a8;">10000</div>
<div class="a" style="left:150.00px;top:555.00px;width:1.00px;height:7.00px;background:#444446;"></div>
<div class="a" style="left:366.00px;top:555.00px;width:1.00px;height:7.00px;background:#444446;"></div>
<div class="a" style="left:431.25px;top:555.00px;width:1.00px;height:7.00px;background:#444446;"></div>
<div class="a" style="left:498.75px;top:555.00px;width:1.00px;height:7.00px;background:#444446;"></div>
<div class="a" style="left:555.00px;top:555.00px;width:1.00px;height:7.00px;background:#444446;"></div>
<svg class="a" style="left:109.00px;top:301.00px;" width="556" height="262" viewBox="0 0 556 262"><polygon points="2.0,163.9 3.6,136.6 5.2,136.7 6.8,137.3 8.4,103.1 10.0,82.7 11.6,37.0 13.2,77.4 14.8,88.5 16.4,98.5 18.0,104.8 19.6,128.3 21.2,144.7 22.8,112.6 24.4,104.2 26.0,75.1 27.6,98.4 29.2,152.5 30.8,128.1 32.4,90.8 34.0,97.6 35.6,87.1 37.2,131.0 38.8,125.8 40.4,131.2 42.0,136.3 43.6,141.8 45.2,128.1 46.8,110.3 48.4,128.2 50.0,124.5 51.6,115.1 53.2,114.7 54.8,103.3 56.4,86.1 58.0,92.8 59.6,72.1 61.2,109.5 62.8,93.7 64.4,92.5 66.0,105.7 67.6,107.1 69.2,96.1 70.8,88.5 72.4,90.2 74.0,89.1 75.6,89.1 77.2,107.3 78.8,102.0 80.4,118.5 82.0,113.1 83.6,109.1 85.2,101.5 86.8,100.1 88.4,112.0 90.0,124.1 91.6,123.2 93.2,149.8 94.8,155.8 96.4,152.6 98.0,142.1 99.6,100.3 101.2,144.4 102.8,123.5 104.4,128.1 106.0,168.9 107.6,172.5 109.2,115.5 110.8,110.6 112.4,97.8 114.0,133.0 115.6,100.6 117.2,104.5 118.8,105.1 120.4,114.1 122.0,65.1 123.6,95.3 125.2,101.4 126.8,100.1 128.4,102.6 130.0,85.6 131.6,101.8 133.2,111.1 134.8,85.9 136.4,116.5 138.0,113.3 139.6,118.9 141.2,88.9 142.8,71.8 144.4,69.5 146.0,103.1 147.6,110.8 149.2,127.4 150.8,110.7 152.4,125.7 154.0,120.4 155.6,128.4 157.2,122.2 158.8,127.1 160.4,134.0 162.0,126.6 163.6,115.9 165.2,102.5 166.8,109.4 168.4,117.8 170.0,103.9 171.6,110.4 173.2,121.5 174.8,151.6 176.4,152.5 178.0,114.0 179.6,115.0 181.2,118.1 182.8,123.9 184.4,145.3 186.0,139.8 187.6,164.3 189.2,146.8 190.8,157.4 192.4,154.5 194.0,125.4 195.6,134.5 197.2,123.2 198.8,167.4 200.4,143.2 202.0,134.4 203.6,163.3 205.2,159.4 206.8,148.6 208.4,146.7 210.0,129.1 211.6,120.3 213.2,145.4 214.8,152.8 216.4,154.3 218.0,140.1 219.6,142.5 221.2,190.6 222.8,175.1 224.4,169.5 226.0,160.7 227.6,160.6 229.2,202.0 230.8,192.7 232.4,200.2 234.0,185.9 235.6,162.8 237.2,153.6 238.8,153.8 240.4,143.7 242.0,153.9 243.6,166.8 245.2,197.7 246.8,187.9 248.4,185.5 250.0,175.7 251.6,152.1 253.2,160.7 254.8,177.8 256.4,178.4 258.0,198.0 259.6,194.2 261.2,180.0 262.8,179.1 264.4,168.9 266.0,162.2 267.6,186.0 269.2,179.6 270.8,198.3 272.4,197.3 274.0,217.8 275.6,178.4 277.2,158.4 278.8,174.1 280.4,158.3 282.0,173.6 283.6,167.8 285.2,178.4 286.8,179.0 288.4,188.1 290.0,209.8 291.6,177.9 293.2,159.3 294.8,135.6 296.4,145.5 298.0,171.9 299.6,118.2 301.2,104.2 302.8,125.3 304.4,144.6 306.0,125.5 307.6,123.9 309.2,110.4 310.8,116.9 312.4,129.5 314.0,102.5 315.6,148.5 317.2,176.0 318.8,188.2 320.4,187.8 322.0,147.7 323.6,132.7 325.2,121.2 326.8,131.2 328.4,147.3 330.0,159.7 331.6,179.2 333.2,160.4 334.8,139.5 336.4,103.1 338.0,134.3 339.6,174.0 341.2,142.3 342.8,138.0 344.4,125.4 346.0,152.5 347.6,164.0 349.2,160.2 350.8,148.6 352.4,123.1 354.0,123.6 355.6,118.7 357.2,126.8 358.8,148.4 360.4,151.7 362.0,161.2 363.6,141.9 365.2,153.9 366.8,150.7 368.4,145.3 370.0,133.1 371.6,126.9 373.2,118.8 374.8,127.1 376.4,123.8 378.0,121.3 379.6,147.8 381.2,102.5 382.8,120.1 384.4,87.7 386.0,118.4 387.6,129.6 389.2,138.5 390.8,143.3 392.4,146.4 394.0,148.7 395.6,128.0 397.2,96.6 398.8,121.9 400.4,116.8 402.0,157.7 403.6,188.2 405.2,190.2 406.8,193.6 408.4,192.1 410.0,191.6 411.6,193.8 413.2,193.3 414.8,193.0 416.4,190.9 418.0,188.1 419.6,186.0 421.2,189.3 422.8,189.3 424.4,189.2 426.0,191.6 427.6,193.1 429.2,191.4 430.8,196.1 432.4,194.5 434.0,191.0 435.6,190.9 437.2,194.8 438.8,189.0 440.4,190.8 442.0,190.3 443.6,193.0 445.2,191.3 446.8,190.9 448.4,192.8 450.0,192.0 451.6,194.1 453.2,192.8 454.8,190.4 456.4,192.1 458.0,190.9 459.6,189.3 461.2,192.8 462.8,188.8 464.4,190.4 466.0,189.5 467.6,194.1 469.2,192.7 470.8,191.8 472.4,189.5 474.0,185.7 475.6,192.9 477.2,168.1 478.8,144.6 480.4,173.2 482.0,143.9 483.6,150.9 485.2,142.0 486.8,154.7 488.4,149.2 490.0,146.5 491.6,140.3 493.2,120.2 494.8,91.1 496.4,108.7 498.0,133.1 499.6,128.3 501.2,135.7 502.8,126.1 504.4,101.6 506.0,90.3 507.6,98.9 509.2,108.3 510.8,116.1 512.4,113.0 514.0,112.7 515.6,96.6 517.2,106.9 518.8,92.4 520.4,88.4 522.0,87.6 523.6,105.4 525.2,80.7 526.8,78.9 528.4,38.7 530.0,107.6 531.6,69.0 533.2,82.6 534.8,53.1 536.4,46.0 538.0,53.7 539.6,48.0 541.2,85.2 542.8,43.3 544.4,41.6 546.0,62.3 547.6,49.4 549.2,57.8 550.8,58.5 550.8,183.3 549.2,177.6 547.6,178.3 546.0,184.4 544.4,189.9 542.8,199.8 541.2,208.8 539.6,195.6 538.0,180.5 536.4,176.0 534.8,199.8 533.2,219.4 531.6,237.0 530.0,227.8 528.4,240.1 526.8,198.1 525.2,201.5 523.6,194.3 522.0,188.1 520.4,186.0 518.8,199.8 517.2,218.1 515.6,215.0 514.0,208.2 512.4,187.0 510.8,203.3 509.2,189.1 507.6,203.3 506.0,207.1 504.4,209.6 502.8,216.6 501.2,217.6 499.6,216.9 498.0,214.9 496.4,210.6 494.8,203.7 493.2,198.5 491.6,203.7 490.0,215.4 488.4,223.1 486.8,206.6 485.2,208.7 483.6,203.4 482.0,209.2 480.4,216.8 478.8,215.7 477.2,217.0 475.6,218.8 474.0,214.4 472.4,207.7 470.8,203.1 469.2,201.5 467.6,201.8 466.0,202.4 464.4,200.1 462.8,202.5 461.2,201.4 459.6,202.2 458.0,200.3 456.4,202.0 454.8,200.9 453.2,200.8 451.6,199.5 450.0,203.2 448.4,202.3 446.8,202.0 445.2,203.0 443.6,201.3 442.0,201.8 440.4,202.1 438.8,201.5 437.2,201.3 435.6,202.4 434.0,201.4 432.4,203.1 430.8,200.8 429.2,201.9 427.6,203.0 426.0,200.9 424.4,201.1 422.8,200.3 421.2,202.1 419.6,200.9 418.0,201.8 416.4,201.1 414.8,202.0 413.2,201.8 411.6,202.0 410.0,199.6 408.4,205.9 406.8,208.9 405.2,212.3 403.6,213.3 402.0,217.2 400.4,223.2 398.8,216.4 397.2,213.9 395.6,213.2 394.0,222.8 392.4,228.5 390.8,227.4 389.2,222.4 387.6,226.5 386.0,217.3 384.4,221.2 382.8,210.6 381.2,212.5 379.6,210.8 378.0,216.9 376.4,212.8 374.8,220.2 373.2,214.6 371.6,201.2 370.0,206.5 368.4,203.9 366.8,206.6 365.2,218.9 363.6,239.6 362.0,232.7 360.4,230.6 358.8,222.4 357.2,225.3 355.6,221.8 354.0,215.8 352.4,219.6 350.8,218.4 349.2,213.8 347.6,222.9 346.0,225.2 344.4,221.4 342.8,218.2 341.2,209.1 339.6,219.0 338.0,228.8 336.4,236.3 334.8,223.6 333.2,226.8 331.6,218.3 330.0,233.7 328.4,233.8 326.8,247.3 325.2,234.7 323.6,240.0 322.0,220.3 320.4,229.1 318.8,251.5 317.2,230.3 315.6,228.6 314.0,230.5 312.4,226.3 310.8,227.6 309.2,232.8 307.6,238.5 306.0,249.5 304.4,238.6 302.8,240.8 301.2,230.8 299.6,236.7 298.0,233.5 296.4,246.2 294.8,232.4 293.2,237.1 291.6,234.1 290.0,251.3 288.4,237.1 286.8,246.5 285.2,237.1 283.6,247.0 282.0,235.0 280.4,248.7 278.8,244.9 277.2,251.5 275.6,248.9 274.0,249.4 272.4,241.1 270.8,238.7 269.2,246.5 267.6,251.9 266.0,247.1 264.4,244.5 262.8,248.0 261.2,241.9 259.6,248.1 258.0,242.1 256.4,253.8 254.8,252.6 253.2,236.9 251.6,236.0 250.0,242.8 248.4,242.5 246.8,241.1 245.2,242.5 243.6,246.0 242.0,236.1 240.4,244.5 238.8,240.8 237.2,244.5 235.6,251.3 234.0,240.4 232.4,245.3 230.8,232.5 229.2,240.2 227.6,244.4 226.0,253.0 224.4,236.3 222.8,242.4 221.2,234.4 219.6,238.3 218.0,233.8 216.4,224.0 214.8,225.5 213.2,229.0 211.6,239.0 210.0,225.9 208.4,228.5 206.8,249.7 205.2,224.7 203.6,214.4 202.0,216.7 200.4,214.0 198.8,210.6 197.2,212.9 195.6,219.5 194.0,219.3 192.4,228.5 190.8,219.8 189.2,216.5 187.6,208.0 186.0,211.7 184.4,204.5 182.8,219.9 181.2,211.7 179.6,213.0 178.0,203.1 176.4,202.1 174.8,202.4 173.2,208.7 171.6,201.6 170.0,203.9 168.4,215.5 166.8,224.7 165.2,219.6 163.6,206.3 162.0,206.3 160.4,207.3 158.8,205.4 157.2,210.4 155.6,206.0 154.0,203.4 152.4,207.2 150.8,203.8 149.2,197.7 147.6,204.2 146.0,199.6 144.4,214.5 142.8,195.6 141.2,197.8 139.6,199.0 138.0,203.8 136.4,207.0 134.8,207.1 133.2,205.9 131.6,210.3 130.0,206.3 128.4,217.9 126.8,224.0 125.2,202.4 123.6,206.1 122.0,209.0 120.4,232.1 118.8,216.4 117.2,206.3 115.6,207.8 114.0,207.0 112.4,223.0 110.8,217.1 109.2,217.5 107.6,206.9 106.0,213.0 104.4,217.3 102.8,211.4 101.2,220.1 99.6,237.0 98.0,216.7 96.4,221.3 94.8,239.2 93.2,234.1 91.6,225.4 90.0,221.3 88.4,216.1 86.8,213.6 85.2,217.9 83.6,219.7 82.0,217.2 80.4,220.7 78.8,207.4 77.2,224.2 75.6,207.5 74.0,207.9 72.4,210.4 70.8,214.3 69.2,231.2 67.6,207.9 66.0,205.6 64.4,214.7 62.8,222.0 61.2,226.1 59.6,214.2 58.0,219.1 56.4,210.6 54.8,214.5 53.2,225.6 51.6,231.0 50.0,215.2 48.4,202.3 46.8,194.6 45.2,205.7 43.6,214.4 42.0,232.0 40.4,217.5 38.8,210.4 37.2,207.0 35.6,211.1 34.0,215.9 32.4,236.3 30.8,227.2 29.2,216.3 27.6,206.8 26.0,193.1 24.4,211.3 22.8,229.3 21.2,240.6 19.6,224.4 18.0,211.8 16.4,204.1 14.8,200.2 13.2,187.4 11.6,183.1 10.0,197.7 8.4,189.0 6.8,224.8 5.2,200.6 3.6,197.6 2.0,175.1" fill="#b3e1fb"/><line x1="2.6" y1="52" x2="2.6" y2="138" stroke="#9fb6c4" stroke-width="1.3"/><polyline points="2.0,234.5 96.5,234.5 131.5,240.0 144.0,243.2 200.2,243.2 226.5,236.2 241.5,233.8 289.0,243.8 361.5,233.8 390.2,225.0 396.5,223.8 397.8,243.8 485.2,243.8 494.0,223.8 519.0,223.8 521.5,236.2 551.5,233.8" fill="none" stroke="#c2d796" stroke-width="1.25" stroke-linejoin="round"/><polyline points="2.0,197.5 6.5,188.8 17.8,190.0 34.0,199.5 56.5,182.0 64.0,182.5 82.8,198.8 86.5,132.5 96.5,122.0 106.5,161.2 116.5,156.2 126.5,188.8 134.0,122.5 151.5,127.0 162.8,130.0 167.8,155.0 174.0,155.0 176.5,112.5 191.5,121.2 205.2,182.5 209.0,122.5 214.0,182.5 219.0,155.0 242.8,132.5 299.0,115.0 299.0,132.5 390.2,132.5 392.8,232.5 396.5,242.5 416.5,252.5 434.0,235.0 486.5,235.0 494.0,175.0 501.5,197.5 507.8,133.8 514.0,196.2 521.5,87.5 532.8,155.0 539.0,90.0 544.0,147.5 551.5,147.5" fill="none" stroke="#e96a52" stroke-opacity="0.85" stroke-width="1.35" stroke-linejoin="round"/><polyline points="2.0,253.8 50.2,253.8 81.0,118.0 200.2,73.0 221.0,119.5 265.2,166.2 299.0,115.0 310.2,103.0 382.8,118.8 390.2,132.5 391.5,240.0 396.5,241.2 501.5,241.2 514.0,90.0 526.5,65.0 551.5,30.0" fill="none" stroke="#f6f6f6" stroke-opacity="0.8" stroke-width="1.5" stroke-linejoin="round"/></svg>
<div class="a" style="left:497.70px;top:315.60px;width:1.00px;height:240.00px;background:#505052;"></div>
<div class="a" style="left:239.20px;top:314.00px;width:1.60px;height:247.00px;background:#17978e;"></div>
<svg class="a" style="left:226.80px;top:299.30px;" width="27" height="19" viewBox="0 0 27 19"><path d="M0 1 Q0 0 1 0 H25.3 Q26.3 0 26.3 1 V14.9 Q26.3 15.9 25.3 15.9 H15.4 L13.2 17.8 L11 15.9 H1 Q0 15.9 0 14.9 Z" fill="#0fa194"/><text x="4.4" y="12.2" font-family="Liberation Sans" font-weight="bold" font-size="10.6" fill="#ffffff">1</text><rect x="13.6" y="4.0" width="8.4" height="6.6" fill="#ffffff"/><rect x="15.2" y="5.8" width="5.2" height="2.6" fill="#0fa194"/></svg>
<div class="a" style="left:302.20px;top:314.00px;width:1.60px;height:247.00px;background:#17978e;"></div>
<svg class="a" style="left:289.80px;top:299.30px;" width="27" height="19" viewBox="0 0 27 19"><path d="M0 1 Q0 0 1 0 H25.3 Q26.3 0 26.3 1 V14.9 Q26.3 15.9 25.3 15.9 H15.4 L13.2 17.8 L11 15.9 H1 Q0 15.9 0 14.9 Z" fill="#0fa194"/><text x="4.4" y="12.2" font-family="Liberation Sans" font-weight="bold" font-size="10.6" fill="#ffffff">3</text><rect x="13.6" y="4.0" width="8.4" height="6.6" fill="#ffffff"/><rect x="15.2" y="5.8" width="5.2" height="2.6" fill="#0fa194"/></svg>
<div class="a" style="left:609.00px;top:314.00px;width:1.60px;height:247.00px;background:#17978e;"></div>
<svg class="a" style="left:596.60px;top:299.30px;" width="27" height="19" viewBox="0 0 27 19"><path d="M0 1 Q0 0 1 0 H25.3 Q26.3 0 26.3 1 V14.9 Q26.3 15.9 25.3 15.9 H15.4 L13.2 17.8 L11 15.9 H1 Q0 15.9 0 14.9 Z" fill="#0fa194"/><text x="4.4" y="12.2" font-family="Liberation Sans" font-weight="bold" font-size="10.6" fill="#ffffff">2</text><rect x="13.6" y="4.0" width="8.4" height="6.6" fill="#ffffff"/><rect x="15.2" y="5.8" width="5.2" height="2.6" fill="#0fa194"/></svg>
<div class="a" style="left:471.10px;top:276.30px;width:54.80px;height:18.60px;background:#3d3d3f;border-radius:1px"></div>
<div class="a t r" style="left:476.20px;top:280.97px;font-size:11.5px;color:#dedede;transform:scaleX(0.9385);transform-origin:0 0;">11:00 PM</div>
<div class="a" style="left:488.70px;top:300.20px;width:19.60px;height:15.40px;background:#3b3b3d;border-radius:1px"></div>
<svg class="a" style="left:492.80px;top:301.80px;" width="12" height="12" viewBox="0 0 12 12"><line x1="6" y1="1.6" x2="6" y2="10.4" stroke="#6fd3c2" stroke-width="1.6"/><line x1="1.6" y1="6" x2="10.4" y2="6" stroke="#6fd3c2" stroke-width="1.6"/></svg>
<svg class="a" style="left:497.50px;top:337.00px;" width="16" height="22" viewBox="0 0 16 22"><path d="M1.8 1.6 V15.6 L5.2 12.4 L7.6 18.2 L10.2 17.1 L7.8 11.6 L12.4 11.6 Z" fill="#111" stroke="#f4f4f4" stroke-width="1.2" stroke-linejoin="round"/></svg>
<div class="a t r" style="left:127.38px;top:565.27px;font-size:12.2px;color:#8d8e91;transform:scaleX(1.0189);transform-origin:0 0;">6:00 PM</div>
<div class="a t" style="left:217.50px;top:565.27px;font-size:12.2px;color:#f0f0f0;font-weight:bold;">7:00 PM</div>
<div class="a t" style="left:280.12px;top:565.27px;font-size:12.2px;color:#f0f0f0;font-weight:bold;transform:scaleX(1.0149);transform-origin:0 0;">8:00 PM</div>
<div class="a t r" style="left:343.25px;top:565.27px;font-size:12.2px;color:#8d8e91;transform:scaleX(1.0244);transform-origin:0 0;">9:00 PM</div>
<div class="a t r" style="left:406.12px;top:565.27px;font-size:12.2px;color:#8d8e91;transform:scaleX(0.9823);transform-origin:0 0;">10:00 PM</div>
<div class="a t r" style="left:474.25px;top:565.27px;font-size:12.2px;color:#8d8e91;transform:scaleX(0.9753);transform-origin:0 0;">11:00 PM</div>
<div class="a t r" style="left:541.00px;top:565.27px;font-size:12.2px;color:#8d8e91;transform:scaleX(0.9624);transform-origin:0 0;">Feb 7</div>
<div class="a t" style="left:586.00px;top:565.27px;font-size:12.2px;color:#f0f0f0;font-weight:bold;transform:scaleX(1.0204);transform-origin:0 0;">5:00 PM</div>
<div class="a" style="left:27.50px;top:594.00px;width:4.50px;height:35.00px;background:#ee6b4c;"></div>
<div class="a" style="left:32.00px;top:594.00px;width:168.50px;height:35.00px;background:#3d3d3f;"></div>
<div class="a t" style="left:44.00px;top:598.52px;font-size:11.2px;color:#a3a4a7;font-weight:bold;letter-spacing:0.6px;transform:scaleX(0.8928);transform-origin:0 0;">CIRCULATING PRESSURE</div>
<div class="a t" style="left:44.00px;top:611.97px;font-size:12.2px;color:#f2f2f2;font-weight:bold;transform:scaleX(1.0474);transform-origin:0 0;">5,511.46</div>
<svg class="a" style="left:178.00px;top:612.00px;" width="16" height="12" viewBox="0 0 16 12"><path d="M1 6 C3.2 2.2 5.6 1 8 1 C10.4 1 12.8 2.2 15 6 C12.8 9.8 10.4 11 8 11 C5.6 11 3.2 9.8 1 6 Z" fill="#bdbdbd"/><circle cx="8" cy="6" r="3.1" fill="#3d3d3f"/><circle cx="8" cy="6" r="1.6" fill="#bdbdbd"/></svg>
<div class="a" style="left:209.20px;top:594.00px;width:5.50px;height:35.00px;background:#ffffff;"></div>
<div class="a" style="left:214.70px;top:594.00px;width:167.80px;height:35.00px;background:#3d3d3f;"></div>
<div class="a t" style="left:226.70px;top:598.52px;font-size:11.2px;color:#a3a4a7;font-weight:bold;letter-spacing:0.6px;transform:scaleX(0.9243);transform-origin:0 0;">DEPTH (FT)</div>
<div class="a t" style="left:226.70px;top:611.97px;font-size:12.2px;color:#f2f2f2;font-weight:bold;transform:scaleX(1.0273);transform-origin:0 0;">1,482.32</div>
<svg class="a" style="left:360.00px;top:612.00px;" width="16" height="12" viewBox="0 0 16 12"><path d="M1 6 C3.2 2.2 5.6 1 8 1 C10.4 1 12.8 2.2 15 6 C12.8 9.8 10.4 11 8 11 C5.6 11 3.2 9.8 1 6 Z" fill="#bdbdbd"/><circle cx="8" cy="6" r="3.1" fill="#3d3d3f"/><circle cx="8" cy="6" r="1.6" fill="#bdbdbd"/></svg>
<div class="a" style="left:390.00px;top:594.00px;width:5.50px;height:35.00px;background:#b3e1fb;"></div>
<div class="a" style="left:395.50px;top:594.00px;width:167.50px;height:35.00px;background:#3d3d3f;"></div>
<div class="a t" style="left:407.50px;top:598.52px;font-size:11.2px;color:#a3a4a7;font-weight:bold;letter-spacing:0.6px;transform:scaleX(0.9070);transform-origin:0 0;">WEIGHT (LBS)</div>
<div class="a t" style="left:407.50px;top:611.97px;font-size:12.2px;color:#f2f2f2;font-weight:bold;transform:scaleX(1.0273);transform-origin:0 0;">2,296.61</div>
<svg class="a" style="left:540.50px;top:612.00px;" width="16" height="12" viewBox="0 0 16 12"><path d="M1 6 C3.2 2.2 5.6 1 8 1 C10.4 1 12.8 2.2 15 6 C12.8 9.8 10.4 11 8 11 C5.6 11 3.2 9.8 1 6 Z" fill="#bdbdbd"/><circle cx="8" cy="6" r="3.1" fill="#3d3d3f"/><circle cx="8" cy="6" r="1.6" fill="#bdbdbd"/></svg>
<div class="a" style="left:572.50px;top:594.00px;width:4.50px;height:35.00px;background:#bcdb8c;"></div>
<div class="a" style="left:577.00px;top:594.00px;width:168.00px;height:35.00px;background:#3d3d3f;"></div>
<div class="a t" style="left:589.00px;top:598.52px;font-size:11.2px;color:#a3a4a7;font-weight:bold;letter-spacing:0.6px;transform:scaleX(0.8976);transform-origin:0 0;">WELLHEAD PRESS. (PSI)</div>
<div class="a t" style="left:589.00px;top:611.97px;font-size:12.2px;color:#f2f2f2;font-weight:bold;transform:scaleX(1.0221);transform-origin:0 0;">7,586.19</div>
<svg class="a" style="left:722.50px;top:612.00px;" width="16" height="12" viewBox="0 0 16 12"><path d="M1 6 C3.2 2.2 5.6 1 8 1 C10.4 1 12.8 2.2 15 6 C12.8 9.8 10.4 11 8 11 C5.6 11 3.2 9.8 1 6 Z" fill="#bdbdbd"/><circle cx="8" cy="6" r="3.1" fill="#3d3d3f"/><circle cx="8" cy="6" r="1.6" fill="#bdbdbd"/></svg>
<div class="a" style="left:72.00px;top:740.75px;width:634.50px;height:1.00px;background:#3b3b3d;"></div>
<div class="a" style="left:72.00px;top:784.20px;width:634.50px;height:1.00px;background:#3b3b3d;"></div>
<div class="a" style="left:72.00px;top:827.80px;width:634.50px;height:1.00px;background:#3b3b3d;"></div>
<div class="a" style="left:72.00px;top:871.30px;width:634.50px;height:1.00px;background:#444446;"></div>
<div class="a t r" style="left:45.20px;top:734.30px;font-size:12.4px;color:#a9a9ab;">15</div>
<div class="a t r" style="left:45.20px;top:778.40px;font-size:12.4px;color:#a9a9ab;">10</div>
<div class="a t r" style="left:52.10px;top:821.90px;font-size:12.4px;color:#a9a9ab;">5</div>
<div class="a t r" style="left:52.10px;top:858.90px;font-size:12.4px;color:#a9a9ab;">0</div>
<div class="a t r" style="left:717.40px;top:735.50px;font-size:12.4px;color:#a9a9ab;">1000</div>
<div class="a t r" style="left:724.30px;top:778.40px;font-size:12.4px;color:#a9a9ab;">500</div>
<div class="a t r" style="left:724.30px;top:822.50px;font-size:12.4px;color:#a9a9ab;">250</div>
<div class="a t r" style="left:738.10px;top:858.90px;font-size:12.4px;color:#a9a9ab;">0</div>
<svg class="a" style="left:80.00px;top:721.00px;" width="630" height="152" viewBox="0 0 630 152"><polygon points="208.5,129.9 210.0,120.6 211.5,135.0 213.0,111.5 214.5,114.2 216.0,98.7 217.5,108.8 219.0,97.1 220.5,100.6 222.0,99.9 223.5,114.4 225.0,106.9 226.5,111.7 228.0,106.6 229.5,109.8 231.0,119.5 232.5,108.4 234.0,99.2 235.5,121.3 237.0,93.0 238.5,94.6 240.0,108.8 241.5,108.1 243.0,107.7 244.5,110.7 246.0,95.0 247.5,104.0 249.0,100.7 250.5,106.5 252.0,108.6 253.5,109.7 255.0,103.0 256.5,117.6 258.0,104.4 259.5,102.1 261.0,93.1 262.5,95.9 264.0,86.5 265.5,94.0 267.0,89.3 268.5,98.0 270.0,92.4 271.5,95.1 273.0,91.6 274.5,97.8 276.0,84.1 277.5,94.0 279.0,81.8 280.5,91.7 282.0,91.1 283.5,94.1 285.0,90.1 286.5,91.1 288.0,83.9 289.5,94.8 291.0,86.6 292.5,99.9 294.0,85.1 295.5,89.6 297.0,89.3 298.5,93.6 300.0,94.8 301.5,97.3 303.0,90.3 304.5,88.5 306.0,88.4 307.5,90.1 309.0,89.1 310.5,93.2 312.0,86.1 313.5,94.4 315.0,87.9 316.5,90.8 318.0,81.3 319.5,84.1 321.0,89.1 322.5,85.3 324.0,83.8 325.5,85.3 327.0,78.7 328.5,88.8 330.0,80.0 331.5,86.4 333.0,79.1 334.5,88.1 336.0,74.4 337.5,90.2 339.0,97.8 340.5,94.9 342.0,88.8 343.5,98.9 345.0,85.2 346.5,80.0 348.0,86.6 349.5,102.6 351.0,90.5 352.5,107.3 354.0,104.5 355.5,96.5 357.0,67.6 358.5,84.3 360.0,85.8 361.5,97.4 363.0,83.2 364.5,81.6 366.0,67.0 367.5,72.1 369.0,55.6 370.5,66.8 372.0,63.6 373.5,65.0 375.0,57.9 376.5,64.2 378.0,58.8 379.5,67.3 381.0,64.3 382.5,76.3 384.0,74.4 385.5,86.5 387.0,70.4 388.5,72.5 390.0,73.2 391.5,90.3 393.0,89.6 394.5,88.6 396.0,76.3 397.5,73.5 399.0,60.9 400.5,60.0 402.0,48.0 403.5,65.3 405.0,65.8 406.5,81.9 408.0,70.2 409.5,65.9 411.0,41.3 412.5,43.3 414.0,41.2 415.5,55.4 417.0,50.8 418.5,65.0 420.0,67.8 421.5,77.6 423.0,69.8 424.5,71.9 426.0,72.1 427.5,76.8 429.0,80.7 430.5,99.9 432.0,88.4 433.5,84.9 435.0,73.6 436.5,81.7 438.0,76.2 439.5,89.4 441.0,86.4 442.5,101.8 444.0,95.7 445.5,105.5 447.0,95.1 448.5,98.9 450.0,87.0 451.5,94.6 453.0,70.7 454.5,88.9 456.0,78.5 457.5,83.4 459.0,72.7 460.5,83.6 462.0,79.4 463.5,101.7 465.0,79.1 466.5,97.4 468.0,75.5 469.5,83.3 471.0,80.3 472.5,98.8 474.0,101.3 475.5,94.8 477.0,87.9 478.5,104.9 480.0,95.0 481.5,105.5 483.0,109.2 484.5,110.1 486.0,92.7 487.5,91.3 489.0,87.2 490.5,102.2 492.0,99.0 493.5,102.1 495.0,88.9 496.5,90.0 498.0,80.7 499.5,91.7 501.0,79.7 502.5,89.0 504.0,82.1 505.5,95.9 507.0,87.8 508.5,96.8 510.0,87.1 511.5,90.5 513.0,88.1 514.5,93.2 516.0,89.3 517.5,89.9 519.0,80.0 520.5,97.7 522.0,84.1 523.5,93.8 525.0,104.3 526.5,98.0 528.0,92.0 529.5,101.5 531.0,100.0 532.5,98.0 534.0,93.8 535.5,97.4 537.0,94.1 538.5,93.9 540.0,87.1 541.5,97.2 543.0,88.4 544.5,105.7 546.0,99.9 547.5,94.7 549.0,83.7 550.5,85.3 552.0,70.4 553.5,75.1 555.0,73.8 556.5,77.8 558.0,79.8 559.5,88.7 561.0,89.4 562.5,109.2 564.0,71.3 565.5,77.8 567.0,76.5 568.5,82.6 570.0,90.0 571.5,84.8 573.0,79.9 574.5,96.5 576.0,96.5 577.5,99.8 579.0,94.8 580.5,105.6 582.0,97.7 583.5,98.7 585.0,96.3 586.5,91.2 588.0,82.5 589.5,79.4 591.0,76.0 592.5,73.2 594.0,79.0 595.5,99.3 597.0,108.7 598.5,115.3 600.0,114.1 601.5,119.5 603.0,123.3 604.5,117.1 606.0,111.5 607.5,120.3 609.0,126.1 610.5,121.8 612.0,112.8 613.5,120.3 615.0,127.3 616.5,115.3 618.0,107.8 619.5,118.1 621.0,116.4 622.5,122.3 624.0,114.8 625.5,120.5 625.5,146.8 208.5,146.8" fill="#b3e1fb"/><polygon points="0.0,102.1 1.5,111.0 3.0,109.8 4.5,121.5 6.0,86.1 7.5,110.0 9.0,119.0 10.5,135.7 12.0,120.0 13.5,130.8 15.0,105.8 16.5,93.1 18.0,87.0 19.5,101.5 21.0,95.0 22.5,91.5 24.0,98.4 25.5,111.9 27.0,123.1 28.5,130.9 30.0,107.7 31.5,90.8 33.0,96.2 34.5,115.7 36.0,108.6 37.5,101.3 39.0,89.7 40.5,89.9 42.0,87.0 43.5,104.5 45.0,101.1 46.5,103.5 48.0,94.5 49.5,97.0 51.0,105.3 52.5,124.0 54.0,107.6 55.5,119.6 57.0,99.1 58.5,118.6 60.0,124.4 61.5,117.4 63.0,90.5 64.5,131.3 66.0,122.6 67.5,125.1 69.0,108.8 70.5,125.6 72.0,113.4 73.5,111.0 75.0,110.7 76.5,122.1 78.0,106.6 79.5,111.8 81.0,100.1 82.5,106.5 84.0,99.0 85.5,106.9 87.0,96.5 88.5,103.6 90.0,89.7 91.5,102.9 93.0,98.0 94.5,113.4 96.0,97.0 97.5,98.1 99.0,87.2 100.5,96.5 102.0,92.5 103.5,104.8 105.0,96.6 106.5,107.4 108.0,97.6 109.5,109.9 111.0,111.9 112.5,129.9 114.0,114.6 115.5,105.2 117.0,114.2 118.5,119.7 120.0,106.1 121.5,120.2 123.0,97.6 124.5,106.7 126.0,93.8 127.5,103.0 129.0,96.8 130.5,111.0 132.0,113.9 133.5,123.3 135.0,111.1 136.5,116.1 138.0,103.1 139.5,107.6 141.0,97.6 142.5,104.8 144.0,110.9 145.5,106.9 147.0,118.7 148.5,129.6 150.0,122.1 151.5,124.0 153.0,110.9 154.5,121.4 156.0,121.2 157.5,137.4 159.0,126.6 160.5,127.4 162.0,119.6 163.5,128.0 165.0,125.8 166.5,130.1 168.0,123.6 169.5,129.5 171.0,119.3 172.5,129.8 174.0,126.9 175.5,137.7 177.0,126.7 178.5,132.0 180.0,125.2 181.5,131.5 183.0,124.4 184.5,128.1 186.0,124.0 187.5,133.8 189.0,126.4 190.5,134.3 192.0,127.6 193.5,140.2 195.0,132.4 196.5,141.8 198.0,133.5 199.5,133.7 201.0,129.4 202.5,134.9 204.0,125.2 205.5,132.5 207.0,138.3 208.5,132.7 210.0,131.1 211.5,135.0 213.0,127.9 214.5,141.8 216.0,120.4 217.5,134.8 219.0,129.2 220.5,141.4 222.0,132.5 223.5,135.8 225.0,114.6 226.5,129.3 228.0,126.9 229.5,141.8 231.0,126.0 232.5,129.5 234.0,121.2 235.5,130.9 237.0,128.5 238.5,135.4 240.0,138.9 241.5,131.9 243.0,122.5 244.5,125.3 246.0,117.1 247.5,120.2 249.0,114.3 250.5,119.1 252.0,109.2 253.5,123.4 255.0,118.7 256.5,130.2 258.0,120.0 259.5,119.1 261.0,111.8 262.5,121.5 264.0,114.9 265.5,120.9 267.0,107.5 268.5,104.8 270.0,96.4 271.5,104.0 273.0,101.6 274.5,114.4 276.0,101.6 277.5,104.9 279.0,91.9 280.5,98.4 282.0,96.2 283.5,104.7 285.0,98.8 286.5,98.4 288.0,89.6 289.5,106.2 291.0,105.2 292.5,105.0 294.0,95.8 295.5,101.7 297.0,101.8 298.5,124.6 300.0,109.5 301.5,130.0 303.0,98.4 304.5,102.4 306.0,89.2 307.5,95.6 309.0,91.2 310.5,95.2 312.0,92.4 313.5,96.6 315.0,91.9 316.5,90.8 318.0,81.3 319.5,84.1 321.0,93.9 322.5,98.1 324.0,93.1 325.5,99.2 327.0,102.3 328.5,96.7 330.0,93.1 331.5,104.2 333.0,99.6 334.5,104.2 336.0,102.6 337.5,113.0 339.0,106.3 340.5,109.8 342.0,94.1 343.5,101.7 345.0,100.7 346.5,112.8 348.0,111.9 349.5,119.5 351.0,118.9 352.5,130.1 354.0,121.2 355.5,114.0 357.0,100.7 358.5,111.4 360.0,105.8 361.5,121.2 363.0,99.7 364.5,100.5 366.0,89.5 367.5,95.0 369.0,95.2 370.5,99.8 372.0,96.4 373.5,96.0 375.0,92.4 376.5,96.8 378.0,96.8 379.5,107.5 381.0,94.0 382.5,96.5 384.0,109.7 385.5,91.2 387.0,113.1 388.5,114.1 390.0,119.3 391.5,125.3 393.0,111.1 394.5,104.7 396.0,98.3 397.5,99.4 399.0,94.5 400.5,102.3 402.0,103.8 403.5,114.9 405.0,112.9 406.5,99.0 408.0,70.2 409.5,67.2 411.0,75.0 412.5,82.9 414.0,82.6 415.5,82.9 417.0,77.9 418.5,87.1 420.0,84.0 421.5,93.9 423.0,105.2 424.5,97.3 426.0,99.1 427.5,108.8 429.0,103.0 430.5,119.2 432.0,113.0 433.5,129.4 435.0,116.3 436.5,113.2 438.0,102.0 439.5,112.8 441.0,106.3 442.5,113.1 444.0,119.2 445.5,129.7 447.0,116.1 448.5,120.4 450.0,106.1 451.5,107.7 453.0,102.1 454.5,112.2 456.0,100.1 457.5,105.0 459.0,97.7 460.5,101.7 462.0,101.1 463.5,103.7 465.0,99.3 466.5,102.9 468.0,99.4 469.5,112.6 471.0,110.5 472.5,126.3 474.0,101.3 475.5,108.9 477.0,104.4 478.5,113.0 480.0,113.1 481.5,119.6 483.0,121.1 484.5,141.8 486.0,122.5 487.5,122.3 489.0,110.9 490.5,113.8 492.0,104.7 493.5,123.2 495.0,105.1 496.5,111.0 498.0,101.5 499.5,104.9 501.0,97.0 502.5,118.7 504.0,98.2 505.5,111.4 507.0,100.0 508.5,106.1 510.0,87.1 511.5,100.6 513.0,109.7 514.5,99.2 516.0,91.4 517.5,102.4 519.0,92.0 520.5,103.2 522.0,100.8 523.5,109.5 525.0,105.2 526.5,116.7 528.0,124.2 529.5,118.8 531.0,105.3 532.5,111.2 534.0,104.9 535.5,113.8 537.0,122.0 538.5,127.9 540.0,120.1 541.5,109.4 543.0,109.8 544.5,118.2 546.0,113.2 547.5,125.9 549.0,130.1 550.5,119.7 552.0,105.9 553.5,102.1 555.0,103.6 556.5,105.4 558.0,104.6 559.5,107.3 561.0,108.2 562.5,116.7 564.0,115.0 565.5,123.4 567.0,110.7 568.5,141.8 570.0,127.7 571.5,133.8 573.0,126.9 574.5,141.8 576.0,131.5 577.5,136.0 579.0,125.1 580.5,128.5 582.0,121.4 583.5,131.5 585.0,124.7 586.5,130.1 588.0,125.9 589.5,135.6 591.0,128.3 592.5,135.3 594.0,131.0 595.5,133.8 597.0,125.6 598.5,136.4 600.0,125.3 601.5,134.4 603.0,125.8 604.5,139.5 606.0,135.1 607.5,141.8 609.0,138.3 610.5,141.8 612.0,135.0 613.5,141.8 615.0,141.8 616.5,141.8 618.0,129.9 619.5,121.6 621.0,126.8 622.5,130.7 624.0,126.7 625.5,133.9 626.5,150.8 0.0,150.8" fill="#9967ac"/></svg>
<div class="a t r" style="left:91.85px;top:881.47px;font-size:12.2px;color:#8d8e91;transform:scaleX(1.0244);transform-origin:0 0;">5:00 PM</div>
<div class="a t r" style="left:154.85px;top:881.47px;font-size:12.2px;color:#8d8e91;transform:scaleX(1.0244);transform-origin:0 0;">6:00 PM</div>
<div class="a t" style="left:217.50px;top:881.47px;font-size:12.2px;color:#f0f0f0;font-weight:bold;">7:00 PM</div>
<div class="a t" style="left:279.52px;top:881.47px;font-size:12.2px;color:#f0f0f0;font-weight:bold;transform:scaleX(1.0149);transform-origin:0 0;">8:00 PM</div>
<div class="a t r" style="left:343.25px;top:881.47px;font-size:12.2px;color:#8d8e91;transform:scaleX(1.0244);transform-origin:0 0;">9:00 PM</div>
<div class="a t r" style="left:406.48px;top:881.47px;font-size:12.2px;color:#8d8e91;transform:scaleX(0.9823);transform-origin:0 0;">10:00 PM</div>
<div class="a t r" style="left:474.00px;top:881.47px;font-size:12.2px;color:#8d8e91;transform:scaleX(0.9753);transform-origin:0 0;">11:00 PM</div>
<div class="a t r" style="left:541.00px;top:881.47px;font-size:12.2px;color:#8d8e91;transform:scaleX(0.9624);transform-origin:0 0;">Feb 7</div>
<div class="a t r" style="left:586.75px;top:881.47px;font-size:12.2px;color:#8d8e91;transform:scaleX(1.0244);transform-origin:0 0;">5:00 PM</div>
<div class="a t r" style="left:649.75px;top:881.47px;font-size:12.2px;color:#8d8e91;transform:scaleX(1.0244);transform-origin:0 0;">6:00 PM</div>
<div class="a" style="left:27.50px;top:907.30px;width:4.80px;height:35.00px;background:#b35a3d;"></div>
<div class="a" style="left:32.30px;top:907.30px;width:166.80px;height:35.00px;background:#262729;"></div>
<div class="a t" style="left:44.30px;top:911.82px;font-size:11.2px;color:#67686b;font-weight:bold;letter-spacing:0.6px;transform:scaleX(0.8719);transform-origin:0 0;">LABEL NAME</div>
<div class="a t r" style="left:44.30px;top:925.27px;font-size:12.2px;color:#c2c2c2;transform:scaleX(1.0618);transform-origin:0 0;">5.2</div>
<svg class="a" style="left:175.60px;top:923.30px;" width="18" height="16" viewBox="0 0 18 16"><path d="M2.6 9.4 C2.6 4.6 5.4 1.7 9 1.7 C12.6 1.7 15.4 4.6 15.4 9.4 Z" fill="#6f7072"/><path d="M2.8 9 Q2 10.4 0.9 10.2 M15.2 9 Q16 10.4 17.1 10.2 M5.4 9.4 Q5.2 12 4.6 13.2 M7.6 9.4 Q7.6 12.4 7.4 14 M10.4 9.4 Q10.4 12.4 10.6 14 M12.6 9.4 Q12.8 12 13.4 13.2" fill="none" stroke="#6f7072" stroke-width="1.5" stroke-linecap="round"/></svg>
<div class="a" style="left:208.50px;top:907.30px;width:5.00px;height:35.00px;background:#9b69b3;"></div>
<div class="a" style="left:213.50px;top:907.30px;width:168.60px;height:35.00px;background:#3d3d3f;"></div>
<div class="a t" style="left:225.50px;top:911.82px;font-size:11.2px;color:#a3a4a7;font-weight:bold;letter-spacing:0.6px;transform:scaleX(0.9279);transform-origin:0 0;">INITIAL FATIQUE</div>
<div class="a t" style="left:225.50px;top:925.27px;font-size:12.2px;color:#f2f2f2;font-weight:bold;transform:scaleX(1.0028);transform-origin:0 0;">5.3</div>
<svg class="a" style="left:359.60px;top:925.30px;" width="16" height="12" viewBox="0 0 16 12"><path d="M1 6 C3.2 2.2 5.6 1 8 1 C10.4 1 12.8 2.2 15 6 C12.8 9.8 10.4 11 8 11 C5.6 11 3.2 9.8 1 6 Z" fill="#bdbdbd"/><circle cx="8" cy="6" r="3.1" fill="#3d3d3f"/><circle cx="8" cy="6" r="1.6" fill="#bdbdbd"/></svg>
<div class="a" style="left:390.50px;top:907.30px;width:5.00px;height:35.00px;background:#b3e1fb;"></div>
<div class="a" style="left:395.50px;top:907.30px;width:168.00px;height:35.00px;background:#3d3d3f;"></div>
<div class="a t" style="left:407.50px;top:911.82px;font-size:11.2px;color:#a3a4a7;font-weight:bold;letter-spacing:0.6px;transform:scaleX(0.8999);transform-origin:0 0;">CURRENT FATIQUE</div>
<div class="a t" style="left:407.50px;top:925.27px;font-size:12.2px;color:#f2f2f2;font-weight:bold;transform:scaleX(1.0028);transform-origin:0 0;">8.3</div>
<svg class="a" style="left:541.00px;top:925.30px;" width="16" height="12" viewBox="0 0 16 12"><path d="M1 6 C3.2 2.2 5.6 1 8 1 C10.4 1 12.8 2.2 15 6 C12.8 9.8 10.4 11 8 11 C5.6 11 3.2 9.8 1 6 Z" fill="#bdbdbd"/><circle cx="8" cy="6" r="3.1" fill="#3d3d3f"/><circle cx="8" cy="6" r="1.6" fill="#bdbdbd"/></svg>
<div class="a" style="left:570.10px;top:907.30px;width:5.20px;height:35.00px;background:#6f93a8;"></div>
<div class="a" style="left:575.30px;top:907.30px;width:169.70px;height:35.00px;background:#262729;"></div>
<div class="a t" style="left:587.30px;top:911.82px;font-size:11.2px;color:#67686b;font-weight:bold;letter-spacing:0.6px;transform:scaleX(0.8719);transform-origin:0 0;">LABEL NAME</div>
<div class="a t r" style="left:587.30px;top:925.27px;font-size:12.2px;color:#c2c2c2;transform:scaleX(1.0112);transform-origin:0 0;">15.0</div>
<svg class="a" style="left:721.50px;top:923.30px;" width="18" height="16" viewBox="0 0 18 16"><path d="M2.6 9.4 C2.6 4.6 5.4 1.7 9 1.7 C12.6 1.7 15.4 4.6 15.4 9.4 Z" fill="#6f7072"/><path d="M2.8 9 Q2 10.4 0.9 10.2 M15.2 9 Q16 10.4 17.1 10.2 M5.4 9.4 Q5.2 12 4.6 13.2 M7.6 9.4 Q7.6 12.4 7.4 14 M10.4 9.4 Q10.4 12.4 10.6 14 M12.6 9.4 Q12.8 12 13.4 13.2" fill="none" stroke="#6f7072" stroke-width="1.5" stroke-linecap="round"/></svg>
<div class="a" style="left:27.50px;top:949.20px;width:4.80px;height:35.00px;background:#6f93a8;"></div>
<div class="a" style="left:32.30px;top:949.20px;width:166.80px;height:35.00px;background:#262729;"></div>
<div class="a t" style="left:44.30px;top:953.72px;font-size:11.2px;color:#67686b;font-weight:bold;letter-spacing:0.6px;transform:scaleX(0.8719);transform-origin:0 0;">LABEL NAME</div>
<div class="a t r" style="left:44.30px;top:967.17px;font-size:12.2px;color:#c2c2c2;transform:scaleX(1.0112);transform-origin:0 0;">15.0</div>
<svg class="a" style="left:175.60px;top:965.20px;" width="18" height="16" viewBox="0 0 18 16"><path d="M2.6 9.4 C2.6 4.6 5.4 1.7 9 1.7 C12.6 1.7 15.4 4.6 15.4 9.4 Z" fill="#6f7072"/><path d="M2.8 9 Q2 10.4 0.9 10.2 M15.2 9 Q16 10.4 17.1 10.2 M5.4 9.4 Q5.2 12 4.6 13.2 M7.6 9.4 Q7.6 12.4 7.4 14 M10.4 9.4 Q10.4 12.4 10.6 14 M12.6 9.4 Q12.8 12 13.4 13.2" fill="none" stroke="#6f7072" stroke-width="1.5" stroke-linecap="round"/></svg>
<div class="a" style="left:208.50px;top:949.20px;width:5.00px;height:35.00px;background:#6f93a8;"></div>
<div class="a" style="left:213.50px;top:949.20px;width:168.60px;height:35.00px;background:#262729;"></div>
<div class="a t" style="left:225.50px;top:953.72px;font-size:11.2px;color:#67686b;font-weight:bold;letter-spacing:0.6px;transform:scaleX(0.8719);transform-origin:0 0;">LABEL NAME</div>
<div class="a t r" style="left:225.50px;top:967.17px;font-size:12.2px;color:#c2c2c2;transform:scaleX(1.0112);transform-origin:0 0;">15.0</div>
<svg class="a" style="left:358.60px;top:965.20px;" width="18" height="16" viewBox="0 0 18 16"><path d="M2.6 9.4 C2.6 4.6 5.4 1.7 9 1.7 C12.6 1.7 15.4 4.6 15.4 9.4 Z" fill="#6f7072"/><path d="M2.8 9 Q2 10.4 0.9 10.2 M15.2 9 Q16 10.4 17.1 10.2 M5.4 9.4 Q5.2 12 4.6 13.2 M7.6 9.4 Q7.6 12.4 7.4 14 M10.4 9.4 Q10.4 12.4 10.6 14 M12.6 9.4 Q12.8 12 13.4 13.2" fill="none" stroke="#6f7072" stroke-width="1.5" stroke-linecap="round"/></svg>
<div class="a" style="left:390.50px;top:949.20px;width:5.00px;height:35.00px;background:#6f93a8;"></div>
<div class="a" style="left:395.50px;top:949.20px;width:168.00px;height:35.00px;background:#262729;"></div>
<div class="a t" style="left:407.50px;top:953.72px;font-size:11.2px;color:#67686b;font-weight:bold;letter-spacing:0.6px;transform:scaleX(0.8719);transform-origin:0 0;">LABEL NAME</div>
<div class="a t r" style="left:407.50px;top:967.17px;font-size:12.2px;color:#c2c2c2;transform:scaleX(1.0112);transform-origin:0 0;">15.0</div>
<svg class="a" style="left:540.00px;top:965.20px;" width="18" height="16" viewBox="0 0 18 16"><path d="M2.6 9.4 C2.6 4.6 5.4 1.7 9 1.7 C12.6 1.7 15.4 4.6 15.4 9.4 Z" fill="#6f7072"/><path d="M2.8 9 Q2 10.4 0.9 10.2 M15.2 9 Q16 10.4 17.1 10.2 M5.4 9.4 Q5.2 12 4.6 13.2 M7.6 9.4 Q7.6 12.4 7.4 14 M10.4 9.4 Q10.4 12.4 10.6 14 M12.6 9.4 Q12.8 12 13.4 13.2" fill="none" stroke="#6f7072" stroke-width="1.5" stroke-linecap="round"/></svg>
<div class="a" style="left:570.10px;top:949.20px;width:5.20px;height:35.00px;background:#6f93a8;"></div>
<div class="a" style="left:575.30px;top:949.20px;width:169.70px;height:35.00px;background:#262729;"></div>
<div class="a t" style="left:587.30px;top:953.72px;font-size:11.2px;color:#67686b;font-weight:bold;letter-spacing:0.6px;transform:scaleX(0.8719);transform-origin:0 0;">LABEL NAME</div>
<div class="a t r" style="left:587.30px;top:967.17px;font-size:12.2px;color:#c2c2c2;transform:scaleX(1.0112);transform-origin:0 0;">15.0</div>
<svg class="a" style="left:721.50px;top:965.20px;" width="18" height="16" viewBox="0 0 18 16"><path d="M2.6 9.4 C2.6 4.6 5.4 1.7 9 1.7 C12.6 1.7 15.4 4.6 15.4 9.4 Z" fill="#6f7072"/><path d="M2.8 9 Q2 10.4 0.9 10.2 M15.2 9 Q16 10.4 17.1 10.2 M5.4 9.4 Q5.2 12 4.6 13.2 M7.6 9.4 Q7.6 12.4 7.4 14 M10.4 9.4 Q10.4 12.4 10.6 14 M12.6 9.4 Q12.8 12 13.4 13.2" fill="none" stroke="#6f7072" stroke-width="1.5" stroke-linecap="round"/></svg>
<div class="a" style="left:788.50px;top:304.60px;width:190.00px;height:38.10px;background:#3c3c3e;border-radius:1px"></div>
<div class="a" style="left:986.70px;top:304.60px;width:189.70px;height:38.10px;background:#3c3c3e;border-radius:1px"></div>
<div class="a" style="left:1184.70px;top:304.60px;width:189.90px;height:38.10px;background:#3c3c3e;border-radius:1px"></div>
<div class="a" style="left:788.50px;top:351.30px;width:190.00px;height:38.50px;background:#3c3c3e;border-radius:1px"></div>
<div class="a" style="left:986.70px;top:351.30px;width:189.70px;height:38.50px;background:#3c3c3e;border-radius:1px"></div>
<div class="a" style="left:1184.70px;top:351.30px;width:189.90px;height:38.50px;background:#3c3c3e;border-radius:1px"></div>
<div class="a t" style="left:803.70px;top:319.09px;font-size:11px;color:#a8a9ac;font-weight:bold;letter-spacing:0.7px;transform:scaleX(0.9087);transform-origin:0 0;">WEIGHT</div>
<div class="a t r" style="left:880.00px;top:316.38px;font-size:16.8px;color:#f2f2f2;transform:scaleX(0.9154);transform-origin:0 0;">12.597.8</div>
<div class="a t r" style="left:946.10px;top:318.24px;font-size:14.6px;color:#8c8d90;transform:scaleX(0.8683);transform-origin:0 0;">lbs</div>
<div class="a t" style="left:1002.30px;top:312.59px;font-size:11px;color:#a8a9ac;font-weight:bold;letter-spacing:0.7px;transform:scaleX(0.9250);transform-origin:0 0;">PUMP</div>
<div class="a t" style="left:1002.30px;top:324.59px;font-size:11px;color:#a8a9ac;font-weight:bold;letter-spacing:0.7px;transform:scaleX(0.8802);transform-origin:0 0;">PRESSURE</div>
<div class="a t r" style="left:1110.00px;top:316.58px;font-size:16.8px;color:#b9d98f;transform:scaleX(0.9821);transform-origin:0 0;">547</div>
<div class="a t r" style="left:1142.50px;top:318.44px;font-size:14.6px;color:#8c8d90;transform:scaleX(0.8844);transform-origin:0 0;">psi</div>
<div class="a t" style="left:1200.50px;top:312.59px;font-size:11px;color:#a8a9ac;font-weight:bold;letter-spacing:0.7px;transform:scaleX(0.8824);transform-origin:0 0;">LOCKUP</div>
<div class="a t" style="left:1200.50px;top:324.59px;font-size:11px;color:#a8a9ac;font-weight:bold;letter-spacing:0.7px;transform:scaleX(0.9187);transform-origin:0 0;">LIMIT</div>
<div class="a t r" style="left:1317.30px;top:316.58px;font-size:16.8px;color:#f2f2f2;transform:scaleX(0.9893);transform-origin:0 0;">547</div>
<div class="a t r" style="left:1350.20px;top:318.44px;font-size:14.6px;color:#8c8d90;transform:scaleX(1.0235);transform-origin:0 0;">ft</div>
<div class="a t" style="left:803.50px;top:365.39px;font-size:11px;color:#a8a9ac;font-weight:bold;letter-spacing:0.7px;transform:scaleX(0.9155);transform-origin:0 0;">YIELD LIMIT</div>
<div class="a t r" style="left:896.50px;top:363.38px;font-size:16.8px;color:#f2f2f2;transform:scaleX(1.0131);transform-origin:0 0;">20.000</div>
<div class="a t r" style="left:953.20px;top:365.24px;font-size:14.6px;color:#8c8d90;transform:scaleX(0.9372);transform-origin:0 0;">ft</div>
<div class="a t" style="left:1002.50px;top:365.39px;font-size:11px;color:#a8a9ac;font-weight:bold;letter-spacing:0.7px;transform:scaleX(0.9188);transform-origin:0 0;">POOH (CF 0.3)</div>
<div class="a t r" style="left:1097.50px;top:363.38px;font-size:16.8px;color:#f2f2f2;transform:scaleX(0.9702);transform-origin:0 0;">15.008</div>
<div class="a t r" style="left:1151.50px;top:365.24px;font-size:14.6px;color:#8c8d90;transform:scaleX(0.8632);transform-origin:0 0;">ft</div>
<div class="a t" style="left:1200.50px;top:365.39px;font-size:11px;color:#a8a9ac;font-weight:bold;letter-spacing:0.7px;transform:scaleX(0.8743);transform-origin:0 0;">LABEL NAME</div>
<div class="a t r" style="left:1313.00px;top:364.10px;font-size:15px;color:#7e7f82;font-style:italic;transform:scaleX(0.8086);transform-origin:0 0;">No Data</div>
<div class="a t" style="left:788.50px;top:406.90px;font-size:12.4px;color:#f4f4f4;font-weight:bold;transform:scaleX(0.9559);transform-origin:0 0;">Surface Weight</div>
<div class="a" style="left:788.50px;top:424.80px;width:110.50px;height:2.60px;background:#7fdccb;border-radius:1px"></div>
<div class="a t r" style="left:906.50px;top:406.90px;font-size:12.4px;color:#9c9c9f;transform:scaleX(1.0270);transform-origin:0 0;">CT Limits</div>
<div class="a" style="left:906.50px;top:424.80px;width:77.00px;height:2.40px;background:#79797b;border-radius:1px"></div>
<svg class="a" style="left:992.10px;top:407.60px;" width="12" height="12" viewBox="0 0 12 12"><line x1="6" y1="1.6" x2="6" y2="10.4" stroke="#a6a6a8" stroke-width="1.3"/><line x1="1.6" y1="6" x2="10.4" y2="6" stroke="#a6a6a8" stroke-width="1.3"/></svg>
<div class="a t" style="left:1024.70px;top:435.76px;font-size:10.8px;color:#a6a7aa;font-weight:bold;letter-spacing:0.6px;transform:scaleX(0.9223);transform-origin:0 0;">SURFACE WEIGHT (LBF)</div>
<div class="a" style="left:809.20px;top:451.00px;width:563.60px;height:1.00px;background:#3b3b3d;"></div>
<div class="a" style="left:809.20px;top:773.30px;width:563.60px;height:1.00px;background:#3b3b3d;"></div>
<div class="a" style="left:809.20px;top:451.00px;width:1.00px;height:322.30px;background:#3b3b3d;"></div>
<div class="a" style="left:1372.80px;top:451.00px;width:1.00px;height:323.30px;background:#3b3b3d;"></div>
<div class="a" style="left:920.30px;top:451.00px;width:1.00px;height:322.30px;background:#3b3b3d;"></div>
<div class="a" style="left:1033.50px;top:451.00px;width:1.00px;height:322.30px;background:#3b3b3d;"></div>
<div class="a" style="left:1146.50px;top:451.00px;width:1.00px;height:322.30px;background:#3b3b3d;"></div>
<div class="a" style="left:1259.00px;top:451.00px;width:1.00px;height:322.30px;background:#3b3b3d;"></div>
<div class="a" style="left:809.20px;top:496.80px;width:563.60px;height:1.00px;background:#3b3b3d;"></div>
<div class="a" style="left:809.20px;top:542.10px;width:563.60px;height:1.00px;background:#3b3b3d;"></div>
<div class="a" style="left:809.20px;top:589.30px;width:563.60px;height:1.00px;background:#3b3b3d;"></div>
<div class="a" style="left:809.20px;top:634.50px;width:563.60px;height:1.00px;background:#3b3b3d;"></div>
<div class="a" style="left:809.20px;top:680.90px;width:563.60px;height:1.00px;background:#3b3b3d;"></div>
<div class="a" style="left:1091.50px;top:451.00px;width:1.30px;height:323.30px;background:#9c9c9e;"></div>
<div class="a" style="left:1091.50px;top:496.70px;width:24.40px;height:1.30px;background:#9c9c9e;"></div>
<div class="a" style="left:1091.50px;top:542.00px;width:24.40px;height:1.30px;background:#9c9c9e;"></div>
<div class="a" style="left:1091.50px;top:589.20px;width:24.40px;height:1.30px;background:#9c9c9e;"></div>
<div class="a" style="left:1091.50px;top:634.40px;width:24.40px;height:1.30px;background:#9c9c9e;"></div>
<div class="a" style="left:1091.50px;top:680.80px;width:24.40px;height:1.30px;background:#9c9c9e;"></div>
<div class="a" style="left:1091.50px;top:772.70px;width:24.40px;height:1.30px;background:#9c9c9e;"></div>
<div class="a t r" style="left:1066.50px;top:452.70px;font-size:12.4px;color:#a9a9ab;transform:scaleX(0.9369);transform-origin:0 0;">0K</div>
<div class="a t r" style="left:1066.50px;top:491.30px;font-size:12.4px;color:#a9a9ab;transform:scaleX(0.9369);transform-origin:0 0;">2K</div>
<div class="a t r" style="left:1066.50px;top:536.60px;font-size:12.4px;color:#a9a9ab;transform:scaleX(0.9369);transform-origin:0 0;">4K</div>
<div class="a t r" style="left:1066.50px;top:583.80px;font-size:12.4px;color:#a9a9ab;transform:scaleX(0.9369);transform-origin:0 0;">6K</div>
<div class="a t r" style="left:1066.50px;top:629.00px;font-size:12.4px;color:#a9a9ab;transform:scaleX(0.9369);transform-origin:0 0;">8K</div>
<div class="a t r" style="left:1066.50px;top:675.40px;font-size:12.4px;color:#a9a9ab;transform:scaleX(0.9208);transform-origin:0 0;">10K</div>
<div class="a t r" style="left:1066.50px;top:723.50px;font-size:12.4px;color:#a9a9ab;transform:scaleX(0.9208);transform-origin:0 0;">12K</div>
<div class="a t r" style="left:1066.50px;top:767.00px;font-size:12.4px;color:#a9a9ab;transform:scaleX(0.9208);transform-origin:0 0;">20K</div>
<div class="a t r" style="left:906.30px;top:783.00px;font-size:12.4px;color:#a9a9ab;transform:scaleX(1.0455);transform-origin:0 0;">- 50k</div>
<div class="a t r" style="left:1018.50px;top:783.00px;font-size:12.4px;color:#a9a9ab;transform:scaleX(1.0455);transform-origin:0 0;">- 25k</div>
<div class="a t r" style="left:1143.70px;top:783.00px;font-size:12.4px;color:#a9a9ab;transform:scaleX(1.0425);transform-origin:0 0;">0</div>
<div class="a t r" style="left:1249.50px;top:783.00px;font-size:12.4px;color:#a9a9ab;transform:scaleX(1.0508);transform-origin:0 0;">25k</div>
<div class="a t r" style="left:1351.20px;top:783.00px;font-size:12.4px;color:#a9a9ab;transform:scaleX(1.0508);transform-origin:0 0;">50k</div>
<svg class="a" style="left:809.20px;top:727.00px;" width="563.5999999999999" height="5" viewBox="0 0 563.5999999999999 5"><line x1="1" y1="2.5" x2="563.5999999999999" y2="2.5" stroke="#d6d6d6" stroke-width="1.5" stroke-dasharray="2 2"/></svg>
<div class="a" style="left:816.00px;top:458.00px;width:92.50px;height:23.00px;background:#3c3c3e;border-radius:1px"></div>
<div class="a t r" style="left:824.30px;top:464.30px;font-size:12.4px;color:#e6e6e6;transform:scaleX(0.9246);transform-origin:0 0;">Label name #1</div>
<div class="a" style="left:816.00px;top:483.40px;width:92.50px;height:23.00px;background:#3c3c3e;border-radius:1px"></div>
<div class="a t r" style="left:824.30px;top:489.70px;font-size:12.4px;color:#e6e6e6;transform:scaleX(0.9246);transform-origin:0 0;">Label name #2</div>
<div class="a" style="left:816.00px;top:509.00px;width:92.50px;height:23.00px;background:#3c3c3e;border-radius:1px"></div>
<div class="a t r" style="left:824.30px;top:515.30px;font-size:12.4px;color:#e6e6e6;transform:scaleX(0.9246);transform-origin:0 0;">Label name #3</div>
<div class="a" style="left:816.00px;top:547.60px;width:86.30px;height:23.00px;background:#3c3c3e;border-radius:1px"></div>
<div class="a t r" style="left:824.30px;top:553.90px;font-size:12.4px;color:#e6e6e6;transform:scaleX(0.9177);transform-origin:0 0;">estes 3h-2-11</div>
<div class="a" style="left:816.00px;top:572.80px;width:33.00px;height:23.00px;background:#3c3c3e;border-radius:1px"></div>
<div class="a t r" style="left:824.30px;top:579.10px;font-size:12.4px;color:#e6e6e6;transform:scaleX(0.8454);transform-origin:0 0;">MD</div>
<div class="a" style="left:816.00px;top:598.00px;width:92.50px;height:23.00px;background:#3c3c3e;border-radius:1px"></div>
<div class="a t r" style="left:824.30px;top:604.30px;font-size:12.4px;color:#e6e6e6;transform:scaleX(0.9246);transform-origin:0 0;">Label name #4</div>
<div class="a" style="left:816.00px;top:624.00px;width:96.50px;height:23.00px;background:#3c3c3e;border-radius:1px"></div>
<div class="a t r" style="left:824.30px;top:630.30px;font-size:12.4px;color:#e6e6e6;transform:scaleX(0.9186);transform-origin:0 0;">CT String name</div>
<div class="a" style="left:816.00px;top:649.00px;width:48.40px;height:23.00px;background:#3c3c3e;border-radius:1px"></div>
<div class="a t r" style="left:824.30px;top:655.30px;font-size:12.4px;color:#e6e6e6;transform:scaleX(0.8271);transform-origin:0 0;">CT OD</div>
<div class="a" style="left:816.00px;top:674.00px;width:68.70px;height:23.00px;background:#3c3c3e;border-radius:1px"></div>
<div class="a t r" style="left:824.30px;top:680.30px;font-size:12.4px;color:#e6e6e6;transform:scaleX(0.9091);transform-origin:0 0;">CT Length</div>
<div class="a" style="left:816.00px;top:699.00px;width:41.50px;height:23.00px;background:#3c3c3e;border-radius:1px"></div>
<div class="a t r" style="left:824.30px;top:705.30px;font-size:12.4px;color:#e6e6e6;transform:scaleX(0.8540);transform-origin:0 0;">WHP</div>
<div class="a" style="left:816.00px;top:724.50px;width:88.50px;height:23.00px;background:#3c3c3e;border-radius:1px"></div>
<div class="a t r" style="left:824.30px;top:730.80px;font-size:12.4px;color:#e6e6e6;transform:scaleX(0.9483);transform-origin:0 0;">Agitator Ratio</div>
<div class="a" style="left:754.4px;top:606.0px;width:80px;height:12px;transform:rotate(-90deg);text-align:center;font-size:10.8px;font-weight:bold;letter-spacing:0.9px;color:#8e8f92;line-height:12px">DEPTH (FT)</div>
<svg class="a" style="left:800.5px;top:441px" width="600" height="340" viewBox="0 0 600 340"><path d="M117.2,10.0 L377.0,168.3 L362.6,199.7 L362.0,267.6 C362,278 348,286 299.29999999999995,286.70000000000005" fill="none" stroke="#c7a0dd" stroke-width="1.8" stroke-linejoin="round"/><polyline points="133.3,10.0 250.0,121.0 300.9,172.0 376.5,211.4 430.4,281.4" fill="none" stroke="#7cbf1f" stroke-width="1.8" stroke-linejoin="round"/><polyline points="89.5,65.0 250.0,97.5 268.5,103.6 290.1,108.5 305.5,113.2 320.9,119.5 325.6,123.2 339.4,124.2 328.6,129.6 333.3,135.0 348.7,147.3 357.9,159.6 364.1,175.0 366.6,187.4 366.8,193.5 379.5,196.6 366.6,202.8 379.5,213.6 366.6,218.2 366.6,227.5 381.0,229.0 366.6,236.7 366.6,247.5 374.9,249.7 366.6,252.0 367.0,287.6" fill="none" stroke="#ef6a4b" stroke-width="1.8" stroke-linejoin="round"/><line x1="77.5" y1="12" x2="77.5" y2="20" stroke="#ef6a4b" stroke-width="2"/><circle cx="77.5" cy="41" r="1.2" fill="#ef6a4b"/><rect x="381" y="229" width="12.4" height="7.7" rx="1.5" fill="#ff4c1e"/><circle cx="367.20000000000005" cy="16.200000000000045" r="6" fill="#f4694b"/><line x1="392.5" y1="253.39999999999998" x2="392.5" y2="269.4" stroke="#dcdcdc" stroke-width="1.3"/><line x1="384.5" y1="261.4" x2="400.5" y2="261.4" stroke="#dcdcdc" stroke-width="1.3"/></svg>
<div class="a" style="left:1234.50px;top:701.80px;width:81.20px;height:18.50px;background:#1e1f21;border-radius:1px"></div>
<div class="a t r" style="left:1238.50px;top:705.44px;font-size:12px;color:#e8e8e8;transform:scaleX(0.9241);transform-origin:0 0;">12.004, 23.357</div>
<svg class="a" style="left:1232.50px;top:727.00px;" width="16" height="22" viewBox="0 0 16 22"><path d="M1.8 1.6 V15.6 L5.2 12.4 L7.6 18.2 L10.2 17.1 L7.8 11.6 L12.4 11.6 Z" fill="#111" stroke="#f4f4f4" stroke-width="1.2" stroke-linejoin="round"/></svg>
<div class="a" style="left:1264.80px;top:459.40px;width:100.30px;height:52.40px;background:#3c3c3e;border-radius:1px"></div>
<div class="a" style="left:1271.80px;top:471.20px;width:9.00px;height:9.00px;background:#f4694b;border-radius:4.5px"></div>
<div class="a t r" style="left:1288.00px;top:469.50px;font-size:12.4px;color:#e6e6e6;transform:scaleX(0.9558);transform-origin:0 0;">Current</div>
<svg class="a" style="left:1270.30px;top:488.80px;" width="12" height="12" viewBox="0 0 12 12"><line x1="6" y1="1.6" x2="6" y2="10.4" stroke="#e0e0e0" stroke-width="1.3"/><line x1="1.6" y1="6" x2="10.4" y2="6" stroke="#e0e0e0" stroke-width="1.3"/></svg>
<div class="a t r" style="left:1288.00px;top:488.70px;font-size:12.4px;color:#e6e6e6;transform:scaleX(0.9126);transform-origin:0 0;">Actual-POOH</div>
<div class="a" style="left:809.50px;top:805.30px;width:563.00px;height:15.40px;background:#3a3a3c;border:1px solid #707072"></div>
<div class="a" style="left:952.80px;top:806.30px;width:311.70px;height:13.40px;background:#3d6563;"></div>
<div class="a" style="left:941.80px;top:805.30px;width:11.20px;height:15.40px;background:#22302f;border:1px solid #86dccd"></div>
<div class="a" style="left:945.80px;top:809.00px;width:1.00px;height:8.00px;background:#cfcfcf;"></div>
<div class="a" style="left:948.20px;top:809.00px;width:1.00px;height:8.00px;background:#cfcfcf;"></div>
<div class="a" style="left:1264.50px;top:805.30px;width:11.20px;height:15.40px;background:#22302f;border:1px solid #86dccd"></div>
<div class="a" style="left:1268.50px;top:809.00px;width:1.00px;height:8.00px;background:#cfcfcf;"></div>
<div class="a" style="left:1270.90px;top:809.00px;width:1.00px;height:8.00px;background:#cfcfcf;"></div>
<div class="a" style="left:787.50px;top:836.20px;width:4.80px;height:23.30px;background:#f06a4a;"></div>
<div class="a" style="left:792.30px;top:836.20px;width:185.10px;height:23.30px;background:#3c3c3e;"></div>
<div class="a t" style="left:800.10px;top:842.69px;font-size:11px;color:#a8a9ac;font-weight:bold;letter-spacing:0.7px;transform:scaleX(0.9049);transform-origin:0 0;">LOCKUP LIMIT</div>
<svg class="a" style="left:945.90px;top:842.00px;" width="16" height="12" viewBox="0 0 16 12"><path d="M1 6 C3.2 2.2 5.6 1 8 1 C10.4 1 12.8 2.2 15 6 C12.8 9.8 10.4 11 8 11 C5.6 11 3.2 9.8 1 6 Z" fill="#c4c4c4"/><circle cx="8" cy="6" r="3.1" fill="#3d3d3f"/><circle cx="8" cy="6" r="1.6" fill="#c4c4c4"/></svg>
<div class="a" style="left:986.20px;top:836.20px;width:4.80px;height:23.30px;background:#c8a2e0;"></div>
<div class="a" style="left:991.00px;top:836.20px;width:183.00px;height:23.30px;background:#3c3c3e;"></div>
<div class="a t" style="left:998.80px;top:842.69px;font-size:11px;color:#a8a9ac;font-weight:bold;letter-spacing:0.7px;transform:scaleX(0.9141);transform-origin:0 0;">YIELD LIMIT</div>
<svg class="a" style="left:1143.20px;top:842.00px;" width="16" height="12" viewBox="0 0 16 12"><path d="M1 6 C3.2 2.2 5.6 1 8 1 C10.4 1 12.8 2.2 15 6 C12.8 9.8 10.4 11 8 11 C5.6 11 3.2 9.8 1 6 Z" fill="#c4c4c4"/><circle cx="8" cy="6" r="3.1" fill="#3d3d3f"/><circle cx="8" cy="6" r="1.6" fill="#c4c4c4"/></svg>
<div class="a" style="left:1183.90px;top:836.20px;width:4.80px;height:23.30px;background:#7cbf1e;"></div>
<div class="a" style="left:1188.70px;top:836.20px;width:184.20px;height:23.30px;background:#3c3c3e;"></div>
<div class="a t" style="left:1196.50px;top:842.69px;font-size:11px;color:#a8a9ac;font-weight:bold;letter-spacing:0.7px;transform:scaleX(0.9283);transform-origin:0 0;">POOH (CF 0.3)</div>
<svg class="a" style="left:1341.20px;top:842.00px;" width="16" height="12" viewBox="0 0 16 12"><path d="M1 6 C3.2 2.2 5.6 1 8 1 C10.4 1 12.8 2.2 15 6 C12.8 9.8 10.4 11 8 11 C5.6 11 3.2 9.8 1 6 Z" fill="#c4c4c4"/><circle cx="8" cy="6" r="3.1" fill="#3d3d3f"/><circle cx="8" cy="6" r="1.6" fill="#c4c4c4"/></svg>
<div class="a" style="left:787.50px;top:871.40px;width:585.00px;height:1.00px;background:#3b3b3d;"></div>
<div class="a t r" style="left:788.90px;top:885.89px;font-size:12.3px;color:#8e8f92;transform:scaleX(0.9758);transform-origin:0 0;">Lockup Limit:</div>
<div class="a t" style="left:863.00px;top:885.89px;font-size:12.3px;color:#f4f4f4;font-weight:bold;transform:scaleX(1.0271);transform-origin:0 0;">7740</div>
<div class="a t r" style="left:894.50px;top:885.89px;font-size:12.3px;color:#8e8f92;transform:scaleX(0.9861);transform-origin:0 0;">lbf at</div>
<div class="a t" style="left:924.50px;top:885.89px;font-size:12.3px;color:#f4f4f4;font-weight:bold;transform:scaleX(1.0408);transform-origin:0 0;">18600</div>
<div class="a t r" style="left:963.30px;top:885.89px;font-size:12.3px;color:#8e8f92;transform:scaleX(1.0959);transform-origin:0 0;">ft</div>
<svg class="a" style="left:1088.50px;top:995.00px;" width="12" height="8" viewBox="0 0 12 8"><path d="M1.5 6.5 L6 2 L10.5 6.5 Z" fill="#6f7072"/></svg>
<div class="a" style="left:1350.00px;top:985.00px;width:23.00px;height:20.00px;background:#3b3b3d;border-radius:1px"></div>
<svg class="a" style="left:1355.50px;top:990.00px;" width="12" height="12" viewBox="0 0 12 12"><line x1="6" y1="1.6" x2="6" y2="10.4" stroke="#cfcfcf" stroke-width="1.3"/><line x1="1.6" y1="6" x2="10.4" y2="6" stroke="#cfcfcf" stroke-width="1.3"/></svg><div id="edge"></div></div>
</body></html>
